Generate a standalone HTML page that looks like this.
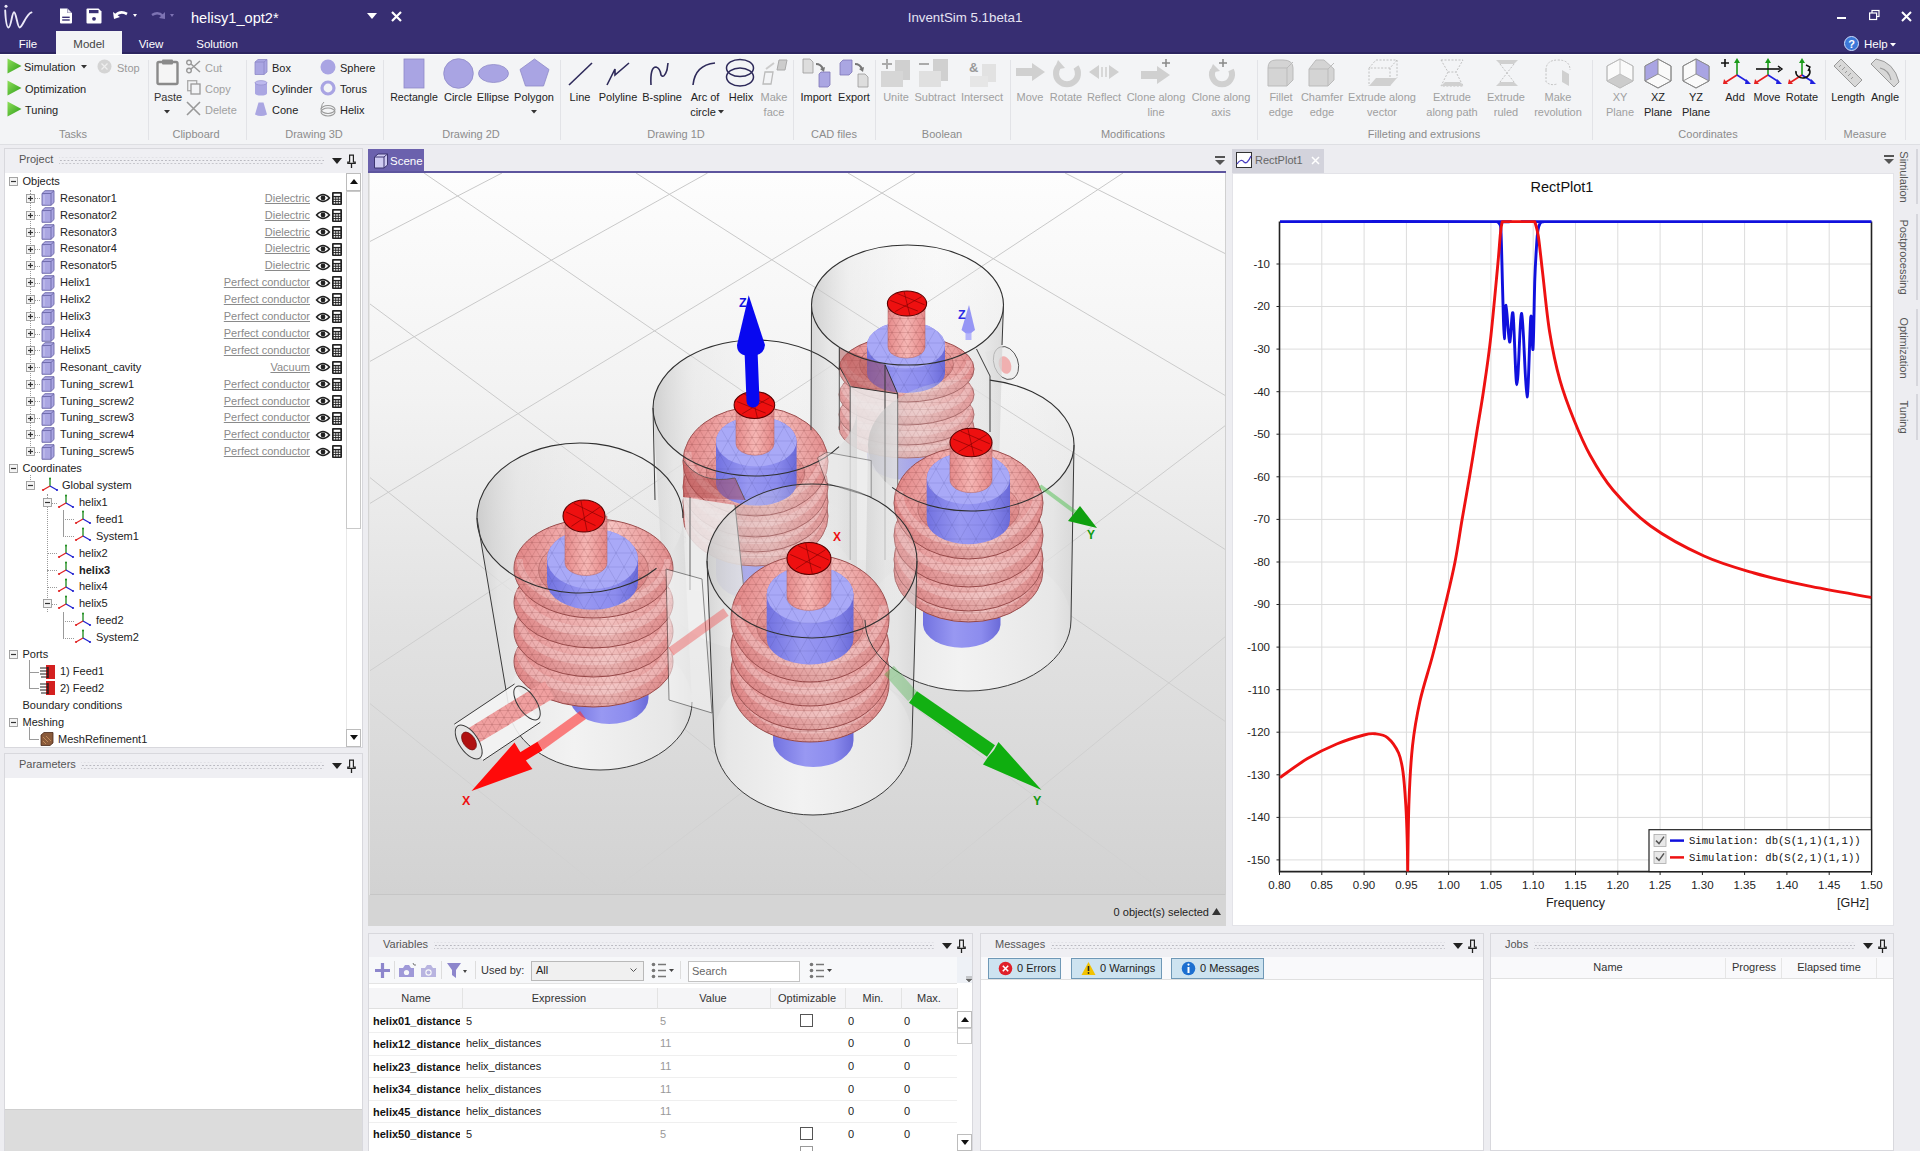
<!DOCTYPE html>
<html><head><meta charset="utf-8"><title>InventSim</title>
<style>
*{box-sizing:border-box;margin:0;padding:0}
html,body{width:1920px;height:1151px;overflow:hidden;background:#ededf1;font-family:"Liberation Sans",sans-serif;font-size:11px;color:#222}
.a{position:absolute}
.t{position:absolute;white-space:nowrap}
svg.a{overflow:visible}
.dots{position:absolute;height:5px;background-image:radial-gradient(circle,#bdbdc4 0.9px,transparent 1.1px);background-size:3px 3px}
</style></head><body>
<div class="a" style="left:0px;top:0px;width:1920px;height:54px;background:#372e72"></div>
<div class="a" style="left:0px;top:52px;width:1920px;height:2px;background:#2c2560"></div>
<svg class="a" style="left:0px;top:0px;" width="40" height="32" viewBox="0 0 40 32"><circle cx="6" cy="6.3" r="1.5" fill="#ece9f8"/><path d="M5.2 10.5 C5.6 19 6.5 27.5 8.6 27.5 C11 27.5 12 12.3 14 12.3 C16.2 12.3 17.4 27.5 19.6 27.5 C22.5 27.5 26 14 31.5 12.4" stroke="#ece9f8" stroke-width="1.9" fill="none" stroke-linecap="round"/></svg>
<svg class="a" style="left:59px;top:8px;" width="14" height="16" viewBox="0 0 14 16"><path d="M1 0.5 H8.5 L13 5 V14.5 Q13 15.5 12 15.5 H2 Q1 15.5 1 14.5 Z" fill="#fff"/><path d="M8.5 0.5 V5 H13 Z" fill="#3a3175"/><path d="M8.8 1 L12.6 4.8 H8.8 Z" fill="#fff" opacity="0.9"/><rect x="3.2" y="8.6" width="7.5" height="1.4" fill="#3a3175"/><rect x="3.2" y="11.3" width="7.5" height="1.4" fill="#3a3175"/></svg>
<svg class="a" style="left:86px;top:8px;" width="16" height="16" viewBox="0 0 16 16"><path d="M0.5 1.5 Q0.5 0.5 1.5 0.5 H12.5 L15.5 3.5 V14.5 Q15.5 15.5 14.5 15.5 H1.5 Q0.5 15.5 0.5 14.5 Z" fill="#fff"/><rect x="3" y="2" width="9.5" height="3.2" fill="#3a3175"/><circle cx="8" cy="10.8" r="1.9" fill="#3a3175"/></svg>
<svg class="a" style="left:112px;top:9px;" width="26" height="14" viewBox="0 0 26 14"><path d="M3 7 Q8 1 15 5" stroke="#fff" stroke-width="2.6" fill="none"/><path d="M1 3 L2 10 L8 8 Z" fill="#fff"/><path d="M21 5 L25 5 L23 8 Z" fill="#fff"/></svg>
<svg class="a" style="left:150px;top:9px;" width="26" height="14" viewBox="0 0 26 14"><path d="M13 7 Q8 2 2 6" stroke="#7d73b3" stroke-width="2.4" fill="none"/><path d="M15 3 L15 10 L9 9 Z" fill="#7d73b3"/><path d="M20 5 L24 5 L22 8 Z" fill="#7d73b3"/></svg>
<div class="t" style="left:191px;top:9.5px;font-size:14.6px;line-height:17.5px;color:#fff;">helisy1_opt2*</div>
<svg class="a" style="left:367px;top:13px;" width="10" height="6" viewBox="0 0 10 6"><path d="M0 0 H10 L5 6 Z" fill="#fff"/></svg>
<svg class="a" style="left:391px;top:11px;" width="11" height="11" viewBox="0 0 11 11"><path d="M1 1 L10 10 M10 1 L1 10" stroke="#fff" stroke-width="2.2"/></svg>
<div class="t" style="left:665px;width:600px;text-align:center;top:9.5px;font-size:13.3px;line-height:16.0px;color:#e6e4f2;">InventSim 5.1beta1</div>
<div class="a" style="left:1837px;top:17px;width:9px;height:2px;background:#fff"></div>
<svg class="a" style="left:1869px;top:10px;" width="11" height="11" viewBox="0 0 11 11"><rect x="3" y="0.5" width="7" height="6" fill="none" stroke="#fff" stroke-width="1.2"/><rect x="0.6" y="3" width="7" height="6.5" fill="#372e72" stroke="#fff" stroke-width="1.2"/></svg>
<svg class="a" style="left:1901px;top:11px;" width="11" height="11" viewBox="0 0 11 11"><path d="M1 1 L10 10 M10 1 L1 10" stroke="#fff" stroke-width="2"/></svg>
<div class="a" style="left:56px;top:31px;width:66px;height:24px;background:#f3f4f6"></div>
<div class="t" style="left:-272px;width:600px;text-align:center;top:37.9px;font-size:11.5px;line-height:13.8px;color:#fff;">File</div>
<div class="t" style="left:-211px;width:600px;text-align:center;top:37.9px;font-size:11.5px;line-height:13.8px;color:#444;">Model</div>
<div class="t" style="left:-149px;width:600px;text-align:center;top:37.9px;font-size:11.5px;line-height:13.8px;color:#fff;">View</div>
<div class="t" style="left:-83px;width:600px;text-align:center;top:37.9px;font-size:11.5px;line-height:13.8px;color:#fff;">Solution</div>
<svg class="a" style="left:1844px;top:36px;" width="15" height="15" viewBox="0 0 15 15"><circle cx="7.5" cy="7.5" r="7" fill="#3c78d8" stroke="#cfe0ff" stroke-width="1"/><text x="7.5" y="11.5" font-size="11" font-family="Liberation Sans" font-weight="bold" fill="#fff" text-anchor="middle">?</text></svg>
<div class="t" style="left:1864px;top:37.9px;font-size:11.5px;line-height:13.8px;color:#fff;">Help</div>
<svg class="a" style="left:1890px;top:43px;" width="6" height="4" viewBox="0 0 6 4"><path d="M0 0 H6 L3 3.5 Z" fill="#fff"/></svg>
<div class="a" style="left:0px;top:54px;width:1920px;height:91px;background:#f3f4f6"></div>
<div class="a" style="left:0px;top:54px;width:1920px;height:1px;background:#fff"></div>
<div class="a" style="left:0px;top:144px;width:1920px;height:1px;background:#dedfe3"></div>
<div class="a" style="left:148px;top:60px;width:1px;height:80px;background:#e2e3e7"></div>
<div class="a" style="left:246px;top:60px;width:1px;height:80px;background:#e2e3e7"></div>
<div class="a" style="left:383px;top:60px;width:1px;height:80px;background:#e2e3e7"></div>
<div class="a" style="left:560px;top:60px;width:1px;height:80px;background:#e2e3e7"></div>
<div class="a" style="left:793px;top:60px;width:1px;height:80px;background:#e2e3e7"></div>
<div class="a" style="left:875px;top:60px;width:1px;height:80px;background:#e2e3e7"></div>
<div class="a" style="left:1010px;top:60px;width:1px;height:80px;background:#e2e3e7"></div>
<div class="a" style="left:1257px;top:60px;width:1px;height:80px;background:#e2e3e7"></div>
<div class="a" style="left:1592px;top:60px;width:1px;height:80px;background:#e2e3e7"></div>
<div class="a" style="left:1825px;top:60px;width:1px;height:80px;background:#e2e3e7"></div>
<div class="a" style="left:1905px;top:60px;width:1px;height:80px;background:#e2e3e7"></div>
<div class="t" style="left:-227px;width:600px;text-align:center;top:127.7px;font-size:11px;line-height:13.2px;color:#8c8c8c;">Tasks</div>
<div class="t" style="left:-104px;width:600px;text-align:center;top:127.7px;font-size:11px;line-height:13.2px;color:#8c8c8c;">Clipboard</div>
<div class="t" style="left:14px;width:600px;text-align:center;top:127.7px;font-size:11px;line-height:13.2px;color:#8c8c8c;">Drawing 3D</div>
<div class="t" style="left:171px;width:600px;text-align:center;top:127.7px;font-size:11px;line-height:13.2px;color:#8c8c8c;">Drawing 2D</div>
<div class="t" style="left:376px;width:600px;text-align:center;top:127.7px;font-size:11px;line-height:13.2px;color:#8c8c8c;">Drawing 1D</div>
<div class="t" style="left:534px;width:600px;text-align:center;top:127.7px;font-size:11px;line-height:13.2px;color:#8c8c8c;">CAD files</div>
<div class="t" style="left:642px;width:600px;text-align:center;top:127.7px;font-size:11px;line-height:13.2px;color:#8c8c8c;">Boolean</div>
<div class="t" style="left:833px;width:600px;text-align:center;top:127.7px;font-size:11px;line-height:13.2px;color:#8c8c8c;">Modifications</div>
<div class="t" style="left:1124px;width:600px;text-align:center;top:127.7px;font-size:11px;line-height:13.2px;color:#8c8c8c;">Filleting and extrusions</div>
<div class="t" style="left:1408px;width:600px;text-align:center;top:127.7px;font-size:11px;line-height:13.2px;color:#8c8c8c;">Coordinates</div>
<div class="t" style="left:1565px;width:600px;text-align:center;top:127.7px;font-size:11px;line-height:13.2px;color:#8c8c8c;">Measure</div>
<svg class="a" style="left:7px;top:58px;" width="15" height="16" viewBox="0 0 15 16"><defs><linearGradient id="gp" x1="0" y1="0" x2="1" y2="1"><stop offset="0" stop-color="#8fe05a"/><stop offset="1" stop-color="#2a9a16"/></linearGradient></defs><path d="M0.5 0.5 L14.5 8 L0.5 15.5 Z" fill="url(#gp)"/></svg>
<svg class="a" style="left:7px;top:80px;" width="15" height="16" viewBox="0 0 15 16"><defs><linearGradient id="gp" x1="0" y1="0" x2="1" y2="1"><stop offset="0" stop-color="#8fe05a"/><stop offset="1" stop-color="#2a9a16"/></linearGradient></defs><path d="M0.5 0.5 L14.5 8 L0.5 15.5 Z" fill="url(#gp)"/></svg>
<svg class="a" style="left:7px;top:101px;" width="15" height="16" viewBox="0 0 15 16"><defs><linearGradient id="gp" x1="0" y1="0" x2="1" y2="1"><stop offset="0" stop-color="#8fe05a"/><stop offset="1" stop-color="#2a9a16"/></linearGradient></defs><path d="M0.5 0.5 L14.5 8 L0.5 15.5 Z" fill="url(#gp)"/></svg>
<div class="t" style="left:24px;top:60.7px;font-size:11px;line-height:13.2px;color:#222;">Simulation</div>
<svg class="a" style="left:81px;top:65px;" width="6" height="4" viewBox="0 0 6 4"><path d="M0 0 H6 L3 3.5 Z" fill="#333"/></svg>
<svg class="a" style="left:97px;top:59px;" width="15" height="15" viewBox="0 0 15 15"><circle cx="7.5" cy="7.5" r="7" fill="#d4d4d4"/><path d="M4.5 4.5 L10.5 10.5 M10.5 4.5 L4.5 10.5" stroke="#eee" stroke-width="1.3"/></svg>
<div class="t" style="left:117px;top:61.7px;font-size:11px;line-height:13.2px;color:#9a9a9a;">Stop</div>
<div class="t" style="left:25px;top:82.7px;font-size:11px;line-height:13.2px;color:#222;">Optimization</div>
<div class="t" style="left:25px;top:103.7px;font-size:11px;line-height:13.2px;color:#222;">Tuning</div>
<svg class="a" style="left:156px;top:58px;" width="24" height="28" viewBox="0 0 24 28"><rect x="1.5" y="4" width="20" height="22" rx="1.5" fill="#f5f5f5" stroke="#8a8a8a" stroke-width="2.4"/><rect x="6" y="1.5" width="11" height="5" rx="1" fill="#8a8a8a"/></svg>
<div class="t" style="left:-132px;width:600px;text-align:center;top:90.7px;font-size:11px;line-height:13.2px;color:#333;">Paste</div>
<svg class="a" style="left:164px;top:110px;" width="6" height="4" viewBox="0 0 6 4"><path d="M0 0 H6 L3 3.5 Z" fill="#333"/></svg>
<svg class="a" style="left:186px;top:59px;" width="15" height="15" viewBox="0 0 15 15"><circle cx="3" cy="11.5" r="2.3" fill="none" stroke="#999" stroke-width="1.4"/><circle cx="3" cy="3.5" r="2.3" fill="none" stroke="#999" stroke-width="1.4"/><path d="M5 5 L14 13 M5 10 L14 2" stroke="#999" stroke-width="1.5"/></svg>
<div class="t" style="left:205px;top:61.7px;font-size:11px;line-height:13.2px;color:#a0a0a0;">Cut</div>
<svg class="a" style="left:187px;top:80px;" width="14" height="15" viewBox="0 0 14 15"><rect x="0.7" y="0.7" width="9" height="10" fill="none" stroke="#aaa" stroke-width="1.3"/><rect x="4" y="4" width="9" height="10" fill="#f3f4f6" stroke="#999" stroke-width="1.3"/></svg>
<div class="t" style="left:205px;top:82.7px;font-size:11px;line-height:13.2px;color:#a0a0a0;">Copy</div>
<svg class="a" style="left:186px;top:101px;" width="15" height="15" viewBox="0 0 15 15"><path d="M1 1 L14 14 M14 1 L1 14" stroke="#999" stroke-width="1.6"/></svg>
<div class="t" style="left:205px;top:103.7px;font-size:11px;line-height:13.2px;color:#a0a0a0;">Delete</div>
<svg class="a" style="left:254px;top:59px;" width="14" height="16" viewBox="0 0 14 16"><path d="M1 3 L4 0.5 H13 V13 L10 15.5 H1 Z" fill="#aaa6e2" stroke="#8e89c8" stroke-width="0.8"/><path d="M1 3 H10 V15.5 M10 3 L13 0.5" stroke="#8e89c8" fill="none" stroke-width="0.8"/></svg>
<div class="t" style="left:272px;top:61.7px;font-size:11px;line-height:13.2px;color:#222;">Box</div>
<svg class="a" style="left:320px;top:59px;" width="16" height="16" viewBox="0 0 16 16"><circle cx="8" cy="8" r="7.5" fill="#a9a4e3"/></svg>
<div class="t" style="left:340px;top:61.7px;font-size:11px;line-height:13.2px;color:#222;">Sphere</div>
<svg class="a" style="left:254px;top:80px;" width="14" height="16" viewBox="0 0 14 16"><rect x="1" y="2.5" width="12" height="11" fill="#aaa6e2"/><ellipse cx="7" cy="13.5" rx="6" ry="2" fill="#aaa6e2"/><ellipse cx="7" cy="2.8" rx="6" ry="2.2" fill="#bdb9ee" stroke="#8e89c8" stroke-width="0.6"/></svg>
<div class="t" style="left:272px;top:82.7px;font-size:11px;line-height:13.2px;color:#222;">Cylinder</div>
<svg class="a" style="left:320px;top:80px;" width="16" height="16" viewBox="0 0 16 16"><circle cx="8" cy="8" r="6" fill="none" stroke="#a9a4e3" stroke-width="3.2"/></svg>
<div class="t" style="left:340px;top:82.7px;font-size:11px;line-height:13.2px;color:#222;">Torus</div>
<svg class="a" style="left:254px;top:101px;" width="14" height="16" viewBox="0 0 14 16"><path d="M4.5 1.5 H9.5 L13 13.5 Q7 16.5 1 13.5 Z" fill="#aaa6e2"/></svg>
<div class="t" style="left:272px;top:103.7px;font-size:11px;line-height:13.2px;color:#222;">Cone</div>
<svg class="a" style="left:320px;top:101px;" width="16" height="16" viewBox="0 0 16 16"><ellipse cx="8" cy="8.5" rx="7" ry="4" fill="none" stroke="#999" stroke-width="1.1"/><ellipse cx="8" cy="11" rx="7" ry="4" fill="none" stroke="#999" stroke-width="1.1"/><path d="M1 8 Q2 2 4 1" stroke="#999" fill="none" stroke-width="1"/></svg>
<div class="t" style="left:340px;top:103.7px;font-size:11px;line-height:13.2px;color:#222;">Helix</div>
<svg class="a" style="left:403px;top:58px;" width="22" height="31" viewBox="0 0 22 31"><rect x="1" y="1" width="20" height="29" fill="#a9a4e3" stroke="#8e89c8" stroke-width="0.8"/></svg>
<div class="t" style="left:114px;width:600px;text-align:center;top:90.9px;font-size:10.6px;line-height:12.7px;color:#222;">Rectangle</div>
<svg class="a" style="left:443px;top:58px;" width="31" height="31" viewBox="0 0 31 31"><circle cx="15.5" cy="15.5" r="14.8" fill="#a9a4e3" stroke="#8e89c8" stroke-width="0.8"/></svg>
<div class="t" style="left:158px;width:600px;text-align:center;top:90.7px;font-size:11px;line-height:13.2px;color:#222;">Circle</div>
<svg class="a" style="left:478px;top:64px;" width="31" height="19" viewBox="0 0 31 19"><ellipse cx="15.5" cy="9.5" rx="15" ry="9" fill="#a9a4e3" stroke="#8e89c8" stroke-width="0.8"/></svg>
<div class="t" style="left:193px;width:600px;text-align:center;top:90.7px;font-size:11px;line-height:13.2px;color:#222;">Ellipse</div>
<svg class="a" style="left:519px;top:58px;" width="31" height="29" viewBox="0 0 31 29"><path d="M15.5 1 L30 11.5 L24.5 28 H6.5 L1 11.5 Z" fill="#a9a4e3" stroke="#8e89c8" stroke-width="0.8"/></svg>
<div class="t" style="left:234px;width:600px;text-align:center;top:90.7px;font-size:11px;line-height:13.2px;color:#222;">Polygon</div>
<svg class="a" style="left:531px;top:110px;" width="6" height="4" viewBox="0 0 6 4"><path d="M0 0 H6 L3 3.5 Z" fill="#333"/></svg>
<svg class="a" style="left:568px;top:61px;" width="26" height="26" viewBox="0 0 26 26"><path d="M1 24 L24 2" stroke="#2e2a5a" stroke-width="1.6"/></svg>
<div class="t" style="left:280px;width:600px;text-align:center;top:90.7px;font-size:11px;line-height:13.2px;color:#222;">Line</div>
<svg class="a" style="left:605px;top:61px;" width="26" height="26" viewBox="0 0 26 26"><path d="M2 24 L10 8 L10 14 L24 2" stroke="#2e2a5a" stroke-width="1.6" fill="none"/></svg>
<div class="t" style="left:318px;width:600px;text-align:center;top:90.7px;font-size:11px;line-height:13.2px;color:#222;">Polyline</div>
<svg class="a" style="left:648px;top:61px;" width="26" height="26" viewBox="0 0 26 26"><path d="M3 24 Q2 6 8 6 Q12 7 13 14 Q16 18 19 9 L20 2" stroke="#2e2a5a" stroke-width="1.6" fill="none"/></svg>
<div class="t" style="left:362px;width:600px;text-align:center;top:90.7px;font-size:11px;line-height:13.2px;color:#222;">B-spline</div>
<svg class="a" style="left:691px;top:61px;" width="26" height="26" viewBox="0 0 26 26"><path d="M2 24 Q4 4 24 2" stroke="#2e2a5a" stroke-width="1.6" fill="none"/></svg>
<div class="t" style="left:405px;width:600px;text-align:center;top:90.7px;font-size:11px;line-height:13.2px;color:#222;">Arc of</div>
<div class="t" style="left:403px;width:600px;text-align:center;top:105.7px;font-size:11px;line-height:13.2px;color:#222;">circle</div>
<svg class="a" style="left:718px;top:110px;" width="6" height="4" viewBox="0 0 6 4"><path d="M0 0 H6 L3 3.5 Z" fill="#333"/></svg>
<svg class="a" style="left:725px;top:58px;" width="32" height="30" viewBox="0 0 32 30"><ellipse cx="15" cy="10" rx="13.5" ry="8.5" fill="none" stroke="#2e2a5a" stroke-width="1.5"/><ellipse cx="15" cy="19" rx="13.5" ry="9" fill="none" stroke="#2e2a5a" stroke-width="1.5"/></svg>
<div class="t" style="left:441px;width:600px;text-align:center;top:90.7px;font-size:11px;line-height:13.2px;color:#222;">Helix</div>
<svg class="a" style="left:760px;top:58px;" width="28" height="29" viewBox="0 0 28 29"><path d="M19 2 H27 L25 12 H17 Z" fill="#ccc" stroke="#aaa" stroke-width="1"/><path d="M5 14 H13 L11 26 H3 Z" fill="none" stroke="#bbb" stroke-width="1.3"/><path d="M6 11 L14 5" stroke="#ccc" stroke-width="2"/></svg>
<div class="t" style="left:474px;width:600px;text-align:center;top:90.7px;font-size:11px;line-height:13.2px;color:#a0a0a0;">Make</div>
<div class="t" style="left:474px;width:600px;text-align:center;top:105.7px;font-size:11px;line-height:13.2px;color:#a0a0a0;">face</div>
<svg class="a" style="left:801px;top:58px;" width="32" height="30" viewBox="0 0 32 30"><path d="M2 1 H9 L12 4 V15 H2 Z" fill="#ddd" stroke="#999" stroke-width="0.8"/><path d="M15 6 Q20 6 22 11" stroke="#777" stroke-width="2.2" fill="none"/><path d="M19 11 L24 9 L23 14 Z" fill="#777"/><path d="M18 16 L20 14 H29 V27 L27 29 H18 Z" fill="#aaa6e2" stroke="#7d76b8" stroke-width="0.8"/></svg>
<div class="t" style="left:516px;width:600px;text-align:center;top:90.7px;font-size:11px;line-height:13.2px;color:#222;">Import</div>
<svg class="a" style="left:839px;top:58px;" width="32" height="30" viewBox="0 0 32 30"><path d="M1 5 L4 2 H13 V14 L10 17 H1 Z" fill="#aaa6e2" stroke="#7d76b8" stroke-width="0.8"/><path d="M16 6 Q21 6 23 11" stroke="#777" stroke-width="2.2" fill="none"/><path d="M20 11 L25 9 L24 14 Z" fill="#777"/><path d="M19 16 H26 L29 19 V29 H19 Z" fill="#ddd" stroke="#999" stroke-width="0.8"/></svg>
<div class="t" style="left:554px;width:600px;text-align:center;top:90.7px;font-size:11px;line-height:13.2px;color:#222;">Export</div>
<svg class="a" style="left:880px;top:58px;" width="32" height="30" viewBox="0 0 32 30"><path d="M7 1 V11 M2 6 H12" stroke="#aaa" stroke-width="2"/><rect x="15" y="2" width="15" height="20" fill="#d0d0d0"/><rect x="1" y="13" width="22" height="16" fill="#d6d6d6"/></svg>
<div class="t" style="left:596px;width:600px;text-align:center;top:90.7px;font-size:11px;line-height:13.2px;color:#a0a0a0;">Unite</div>
<svg class="a" style="left:918px;top:58px;" width="32" height="30" viewBox="0 0 32 30"><path d="M1 6 H11" stroke="#aaa" stroke-width="2"/><rect x="15" y="1" width="15" height="22" fill="#d0d0d0"/><rect x="1" y="13" width="22" height="16" fill="#e0e0e0"/></svg>
<div class="t" style="left:635px;width:600px;text-align:center;top:90.7px;font-size:11px;line-height:13.2px;color:#a0a0a0;">Subtract</div>
<svg class="a" style="left:968px;top:58px;" width="32" height="30" viewBox="0 0 32 30"><text x="1" y="14" font-size="13" font-family="Liberation Sans" font-weight="bold" fill="#999">&amp;</text><rect x="14" y="6" width="14" height="18" fill="#e2e2e2"/><rect x="2" y="18" width="18" height="11" fill="#e6e6e6"/></svg>
<div class="t" style="left:682px;width:600px;text-align:center;top:90.7px;font-size:11px;line-height:13.2px;color:#a0a0a0;">Intersect</div>
<svg class="a" style="left:1015px;top:63px;" width="32" height="18" viewBox="0 0 32 18"><path d="M1 5 H17 V0 L30 9 L17 18 V13 H1 Z" fill="#d0d0d0"/></svg>
<div class="t" style="left:730px;width:600px;text-align:center;top:90.7px;font-size:11px;line-height:13.2px;color:#a0a0a0;">Move</div>
<svg class="a" style="left:1052px;top:58px;" width="30" height="30" viewBox="0 0 30 30"><path d="M6 9 A11 11 0 1 0 24 9" stroke="#d0d0d0" stroke-width="6" fill="none"/><path d="M2 12 L6 2 L13 10 Z" fill="#d0d0d0"/></svg>
<div class="t" style="left:766px;width:600px;text-align:center;top:90.7px;font-size:11px;line-height:13.2px;color:#a0a0a0;">Rotate</div>
<svg class="a" style="left:1088px;top:64px;" width="32" height="16" viewBox="0 0 32 16"><path d="M1 8 L11 1 V15 Z M31 8 L21 1 V15 Z" fill="#d0d0d0"/><path d="M14 3 V13 M18 3 V13" stroke="#d8d8d8" stroke-width="2"/></svg>
<div class="t" style="left:804px;width:600px;text-align:center;top:90.7px;font-size:11px;line-height:13.2px;color:#a0a0a0;">Reflect</div>
<svg class="a" style="left:1140px;top:58px;" width="32" height="28" viewBox="0 0 32 28"><path d="M1 13 H17 V8 L30 17 L17 26 V21 H1 Z" fill="#d0d0d0"/><path d="M26 1 V9 M22 5 H30" stroke="#888" stroke-width="1.5"/></svg>
<div class="t" style="left:856px;width:600px;text-align:center;top:90.7px;font-size:11px;line-height:13.2px;color:#a0a0a0;">Clone along</div>
<div class="t" style="left:856px;width:600px;text-align:center;top:105.7px;font-size:11px;line-height:13.2px;color:#a0a0a0;">line</div>
<svg class="a" style="left:1207px;top:58px;" width="30" height="30" viewBox="0 0 30 30"><path d="M6 12 A10 10 0 1 0 24 12" stroke="#d0d0d0" stroke-width="6" fill="none"/><path d="M2 15 L6 6 L13 13 Z" fill="#d0d0d0"/><path d="M16 1 V9 M12 5 H20" stroke="#888" stroke-width="1.5"/></svg>
<div class="t" style="left:921px;width:600px;text-align:center;top:90.7px;font-size:11px;line-height:13.2px;color:#a0a0a0;">Clone along</div>
<div class="t" style="left:921px;width:600px;text-align:center;top:105.7px;font-size:11px;line-height:13.2px;color:#a0a0a0;">axis</div>
<svg class="a" style="left:1267px;top:58px;" width="28" height="30" viewBox="0 0 28 30"><path d="M1 28 V10 Q1 2 9 2 H16 Q26 2 26 10 V22 L20 28 Z" fill="#d4d4d4" stroke="#bbb" stroke-width="1"/><path d="M1 10 H20 V28 M20 10 L26 4" stroke="#bbb" fill="none"/></svg>
<div class="t" style="left:981px;width:600px;text-align:center;top:90.7px;font-size:11px;line-height:13.2px;color:#a0a0a0;">Fillet</div>
<div class="t" style="left:981px;width:600px;text-align:center;top:105.7px;font-size:11px;line-height:13.2px;color:#a0a0a0;">edge</div>
<svg class="a" style="left:1308px;top:58px;" width="28" height="30" viewBox="0 0 28 30"><path d="M1 28 V11 L8 2 H16 L26 11 V22 L20 28 Z" fill="#d4d4d4" stroke="#bbb" stroke-width="1"/><path d="M1 11 H20 V28 M20 11 L26 5" stroke="#bbb" fill="none"/></svg>
<div class="t" style="left:1022px;width:600px;text-align:center;top:90.7px;font-size:11px;line-height:13.2px;color:#a0a0a0;">Chamfer</div>
<div class="t" style="left:1022px;width:600px;text-align:center;top:105.7px;font-size:11px;line-height:13.2px;color:#a0a0a0;">edge</div>
<svg class="a" style="left:1368px;top:58px;" width="30" height="30" viewBox="0 0 30 30"><path d="M8 2 H29 L22 10 H1 Z M1 10 V28 M22 10 V28 M29 2 V20" stroke="#bbb" stroke-width="0.9" stroke-dasharray="2 1.5" fill="none"/><path d="M1 28 H22 L29 20 H8 Z" fill="#d0d0d0"/></svg>
<div class="t" style="left:1082px;width:600px;text-align:center;top:90.7px;font-size:11px;line-height:13.2px;color:#a0a0a0;">Extrude along</div>
<div class="t" style="left:1082px;width:600px;text-align:center;top:105.7px;font-size:11px;line-height:13.2px;color:#a0a0a0;">vector</div>
<svg class="a" style="left:1437px;top:58px;" width="30" height="30" viewBox="0 0 30 30"><path d="M4 2 H26 L19 14 H11 L4 2 M11 14 L4 28 H26 L19 14" stroke="#bbb" stroke-width="0.9" stroke-dasharray="2 1.5" fill="none"/><path d="M4 28 H26 L23 24 H8 Z" fill="#d0d0d0"/></svg>
<div class="t" style="left:1152px;width:600px;text-align:center;top:90.7px;font-size:11px;line-height:13.2px;color:#a0a0a0;">Extrude</div>
<div class="t" style="left:1152px;width:600px;text-align:center;top:105.7px;font-size:11px;line-height:13.2px;color:#a0a0a0;">along path</div>
<svg class="a" style="left:1492px;top:58px;" width="30" height="30" viewBox="0 0 30 30"><path d="M4 2 H26 L22 6 H8 Z" fill="#d0d0d0"/><path d="M8 6 L22 24 M22 6 L8 24" stroke="#bbb" stroke-width="0.9" stroke-dasharray="2 1.5"/><path d="M4 28 H26 L22 24 H8 Z" fill="#d0d0d0"/></svg>
<div class="t" style="left:1206px;width:600px;text-align:center;top:90.7px;font-size:11px;line-height:13.2px;color:#a0a0a0;">Extrude</div>
<div class="t" style="left:1206px;width:600px;text-align:center;top:105.7px;font-size:11px;line-height:13.2px;color:#a0a0a0;">ruled</div>
<svg class="a" style="left:1543px;top:58px;" width="32" height="30" viewBox="0 0 32 30"><path d="M3 12 Q3 2 15 2 Q27 2 27 12" stroke="#bbb" stroke-width="0.9" stroke-dasharray="2 1.5" fill="none"/><path d="M3 12 V24 Q8 28 14 26" stroke="#bbb" stroke-width="0.9" stroke-dasharray="2 1.5" fill="none"/><path d="M19 12 L26 16 V28 L19 24 Z" fill="#d0d0d0"/></svg>
<div class="t" style="left:1258px;width:600px;text-align:center;top:90.7px;font-size:11px;line-height:13.2px;color:#a0a0a0;">Make</div>
<div class="t" style="left:1258px;width:600px;text-align:center;top:105.7px;font-size:11px;line-height:13.2px;color:#a0a0a0;">revolution</div>
<svg class="a" style="left:1605px;top:58px;" width="30" height="31" viewBox="0 0 30 31"><path d="M15 1 L28 8 V23 L15 30 L2 23 V8 Z" fill="#fafafa" stroke="#bbb" stroke-width="0.9"/><path d="M2 23 L15 16 L28 23 L15 30 Z" fill="#ccc"/><path d="M15 1 V16 L2 23 M15 16 L28 23" stroke="#bbb" stroke-width="0.9" fill="none"/><path d="M15 1 L28 8 V23 L15 30 L2 23 V8 Z" fill="none" stroke="#bbb" stroke-width="0.9"/></svg>
<svg class="a" style="left:1643px;top:58px;" width="30" height="31" viewBox="0 0 30 31"><path d="M15 1 L28 8 V23 L15 30 L2 23 V8 Z" fill="#fafafa" stroke="#888" stroke-width="0.9"/><path d="M2 8 L15 1 V16 L2 23 Z" fill="#a9a4e3"/><path d="M15 1 V16 L2 23 M15 16 L28 23" stroke="#888" stroke-width="0.9" fill="none"/><path d="M15 1 L28 8 V23 L15 30 L2 23 V8 Z" fill="none" stroke="#888" stroke-width="0.9"/></svg>
<svg class="a" style="left:1681px;top:58px;" width="30" height="31" viewBox="0 0 30 31"><path d="M15 1 L28 8 V23 L15 30 L2 23 V8 Z" fill="#fafafa" stroke="#888" stroke-width="0.9"/><path d="M28 8 L15 1 V16 L28 23 Z" fill="#a9a4e3"/><path d="M15 1 V16 L2 23 M15 16 L28 23" stroke="#888" stroke-width="0.9" fill="none"/><path d="M15 1 L28 8 V23 L15 30 L2 23 V8 Z" fill="none" stroke="#888" stroke-width="0.9"/></svg>
<div class="t" style="left:1320px;width:600px;text-align:center;top:90.7px;font-size:11px;line-height:13.2px;color:#a0a0a0;">XY</div>
<div class="t" style="left:1320px;width:600px;text-align:center;top:105.7px;font-size:11px;line-height:13.2px;color:#a0a0a0;">Plane</div>
<div class="t" style="left:1358px;width:600px;text-align:center;top:90.7px;font-size:11px;line-height:13.2px;color:#222;">XZ</div>
<div class="t" style="left:1358px;width:600px;text-align:center;top:105.7px;font-size:11px;line-height:13.2px;color:#222;">Plane</div>
<div class="t" style="left:1396px;width:600px;text-align:center;top:90.7px;font-size:11px;line-height:13.2px;color:#222;">YZ</div>
<div class="t" style="left:1396px;width:600px;text-align:center;top:105.7px;font-size:11px;line-height:13.2px;color:#222;">Plane</div>
<svg class="a" style="left:1722px;top:58px;" width="30" height="30" viewBox="0 0 30 30"><path d="M15 17 V3" stroke="#1a9a1a" stroke-width="1.6"/><path d="M12 5 L15 0 L18 5 Z" fill="#1a9a1a"/><path d="M15 17 L4 24" stroke="#e62020" stroke-width="1.6"/><path d="M2 21 L1 26 L6 26 Z" fill="#e62020"/><path d="M15 17 L26 24" stroke="#2020e0" stroke-width="1.6"/><path d="M24 21 L29 26 L23 26 Z" fill="#2020e0"/><path d="M3 1 V9 M-1 5 H7" stroke="#111" stroke-width="1.6"/></svg>
<div class="t" style="left:1435px;width:600px;text-align:center;top:90.7px;font-size:11px;line-height:13.2px;color:#222;">Add</div>
<svg class="a" style="left:1753px;top:58px;" width="30" height="30" viewBox="0 0 30 30"><path d="M15 17 V3" stroke="#1a9a1a" stroke-width="1.6"/><path d="M12 5 L15 0 L18 5 Z" fill="#1a9a1a"/><path d="M15 17 L4 24" stroke="#e62020" stroke-width="1.6"/><path d="M2 21 L1 26 L6 26 Z" fill="#e62020"/><path d="M15 17 L26 24" stroke="#2020e0" stroke-width="1.6"/><path d="M24 21 L29 26 L23 26 Z" fill="#2020e0"/><path d="M3 11 H27" stroke="#111" stroke-width="1.6"/><path d="M25 8 L29 11 L25 14" stroke="#111" stroke-width="1.4" fill="none"/></svg>
<div class="t" style="left:1467px;width:600px;text-align:center;top:90.7px;font-size:11px;line-height:13.2px;color:#222;">Move</div>
<svg class="a" style="left:1787px;top:58px;" width="30" height="30" viewBox="0 0 30 30"><path d="M15 17 V3" stroke="#1a9a1a" stroke-width="1.6"/><path d="M12 5 L15 0 L18 5 Z" fill="#1a9a1a"/><path d="M15 17 L4 24" stroke="#e62020" stroke-width="1.6"/><path d="M2 21 L1 26 L6 26 Z" fill="#e62020"/><path d="M15 17 L26 24" stroke="#2020e0" stroke-width="1.6"/><path d="M24 21 L29 26 L23 26 Z" fill="#2020e0"/><path d="M9 13 A7 6 0 1 0 22 11" stroke="#111" stroke-width="1.6" fill="none"/><path d="M19 7 L23 9 L21 13" stroke="#111" stroke-width="1.4" fill="none"/></svg>
<div class="t" style="left:1502px;width:600px;text-align:center;top:90.7px;font-size:11px;line-height:13.2px;color:#222;">Rotate</div>
<svg class="a" style="left:1833px;top:58px;" width="30" height="30" viewBox="0 0 30 30"><path d="M1 8 L8 1 L29 22 L22 29 Z" fill="#d8d8d8" stroke="#999" stroke-width="1"/><path d="M6 9 L8 7 M9 12 L12 9 M12 15 L14 13 M15 18 L18 15 M18 21 L20 19" stroke="#888" stroke-width="0.8"/></svg>
<div class="t" style="left:1548px;width:600px;text-align:center;top:90.7px;font-size:11px;line-height:13.2px;color:#222;">Length</div>
<svg class="a" style="left:1870px;top:58px;" width="30" height="30" viewBox="0 0 30 30"><path d="M1 6 L6 1 Q24 4 29 24 L24 29 Z" fill="#d8d8d8" stroke="#999" stroke-width="1"/><path d="M10 10 Q19 12 21 22" stroke="#999" stroke-width="1.2" fill="none"/></svg>
<div class="t" style="left:1585px;width:600px;text-align:center;top:90.7px;font-size:11px;line-height:13.2px;color:#222;">Angle</div>
<div class="a" style="left:4px;top:148px;width:359px;height:600px;background:#fff;border:1px solid #d8d8dd"></div>
<div class="a" style="left:5px;top:149px;width:357px;height:24px;background:#efeff3"></div>
<div class="t" style="left:19px;top:153.4px;font-size:11px;line-height:13.2px;color:#555;">Project</div>
<div class="a" style="left:59px;top:157px;width:265px;height:7px;background-image:radial-gradient(circle,#a8a8b0 0.75px,transparent 1.15px),radial-gradient(circle,#a8a8b0 0.75px,transparent 1.15px);background-size:3.75px 7.5px;background-position:0 0,1.875px 3.75px;opacity:0.75"></div>
<svg class="a" style="left:332px;top:158px;" width="10" height="6" viewBox="0 0 10 6"><path d="M0 0 H10 L5 6 Z" fill="#222"/></svg>
<svg class="a" style="left:347px;top:154px;" width="9" height="15" viewBox="0 0 9 15"><path d="M2.6 1.2 H6.4 V8 H8.2 V9.4 H0.8 V8 H2.6 Z" fill="#f4f4f6" stroke="#222" stroke-width="1.2"/><path d="M4.5 9.5 V14" stroke="#222" stroke-width="1.3"/></svg>
<div class="a" style="left:346px;top:173px;width:15px;height:574px;background:#fff;border-left:1px solid #e8e8e8"></div>
<div class="a" style="left:346px;top:173px;width:15px;height:18px;background:#fff;border:1px solid #bcbcbc"></div>
<svg class="a" style="left:350px;top:179px;" width="8" height="5" viewBox="0 0 8 5"><path d="M0 5 H8 L4 0 Z" fill="#111"/></svg>
<div class="a" style="left:346px;top:191px;width:15px;height:338px;background:#fff;border:1px solid #c9c9c9"></div>
<div class="a" style="left:346px;top:729px;width:15px;height:18px;background:#fff;border:1px solid #bcbcbc"></div>
<svg class="a" style="left:350px;top:735px;" width="8" height="5" viewBox="0 0 8 5"><path d="M0 0 H8 L4 5 Z" fill="#111"/></svg>
<div class="a" style="left:30px;top:190px;width:0;height:262px;border-left:1px dotted #9a9a9a"></div>
<svg class="a" style="left:9px;top:176.9px;" width="9" height="9" viewBox="0 0 9 9"><rect x="0.5" y="0.5" width="8" height="8" fill="#f4f4f4" stroke="#9a9a9a" stroke-width="0.9"/><path d="M2 4.5 H7" stroke="#333" stroke-width="1.2"/></svg>
<div class="t" style="left:22.5px;top:174.8px;font-size:11px;line-height:13.2px;color:#222;">Objects</div>
<div class="a" style="left:30px;top:198.3px;width:10px;height:0;border-top:1px dotted #9a9a9a"></div>
<svg class="a" style="left:26px;top:193.8px;" width="9" height="9" viewBox="0 0 9 9"><rect x="0.5" y="0.5" width="8" height="8" fill="#f4f4f4" stroke="#9a9a9a" stroke-width="0.9"/><path d="M2 4.5 H7" stroke="#333" stroke-width="1.2"/><path d="M4.5 2 V7" stroke="#333" stroke-width="1.2"/></svg>
<svg class="a" style="left:41px;top:190.3px;" width="14" height="16" viewBox="0 0 14 16"><path d="M1 3.5 L4 0.7 H13 V12.5 L10 15.3 H1 Z" fill="#aaa6e2" stroke="#6b66a8" stroke-width="0.9"/><path d="M1 3.5 H10 V15.3 M10 3.5 L13 0.7" stroke="#6b66a8" fill="none" stroke-width="0.9"/><path d="M3 5 V14" stroke="#c9c6f0" stroke-width="1"/></svg>
<div class="t" style="left:60px;top:191.7px;font-size:11px;line-height:13.2px;color:#222;">Resonator1</div>
<div class="t" style="left:-290px;width:600px;text-align:right;top:191.7px;font-size:11px;line-height:13.2px;color:#8a8a8a;text-decoration:underline;">Dielectric</div>
<svg class="a" style="left:316px;top:193.3px;" width="14" height="10" viewBox="0 0 14 10"><path d="M0.5 5 Q7 -2 13.5 5 Q7 12 0.5 5 Z" fill="#fff" stroke="#222" stroke-width="1.4"/><circle cx="7" cy="5" r="2.4" fill="#222"/></svg>
<svg class="a" style="left:332px;top:191.8px;" width="10" height="13" viewBox="0 0 10 13"><rect x="0" y="0" width="10" height="13" rx="1" fill="#222"/><rect x="1.7" y="1.7" width="6.6" height="2.2" fill="#fff"/><g fill="#fff"><rect x="1.7" y="5.3" width="1.6" height="1.4"/><rect x="4.2" y="5.3" width="1.6" height="1.4"/><rect x="6.7" y="5.3" width="1.6" height="1.4"/><rect x="1.7" y="7.7" width="1.6" height="1.4"/><rect x="4.2" y="7.7" width="1.6" height="1.4"/><rect x="6.7" y="7.7" width="1.6" height="1.4"/><rect x="1.7" y="10.1" width="1.6" height="1.4"/><rect x="4.2" y="10.1" width="1.6" height="1.4"/><rect x="6.7" y="10.1" width="1.6" height="1.4"/></g></svg>
<div class="a" style="left:30px;top:215.2px;width:10px;height:0;border-top:1px dotted #9a9a9a"></div>
<svg class="a" style="left:26px;top:210.7px;" width="9" height="9" viewBox="0 0 9 9"><rect x="0.5" y="0.5" width="8" height="8" fill="#f4f4f4" stroke="#9a9a9a" stroke-width="0.9"/><path d="M2 4.5 H7" stroke="#333" stroke-width="1.2"/><path d="M4.5 2 V7" stroke="#333" stroke-width="1.2"/></svg>
<svg class="a" style="left:41px;top:207.2px;" width="14" height="16" viewBox="0 0 14 16"><path d="M1 3.5 L4 0.7 H13 V12.5 L10 15.3 H1 Z" fill="#aaa6e2" stroke="#6b66a8" stroke-width="0.9"/><path d="M1 3.5 H10 V15.3 M10 3.5 L13 0.7" stroke="#6b66a8" fill="none" stroke-width="0.9"/><path d="M3 5 V14" stroke="#c9c6f0" stroke-width="1"/></svg>
<div class="t" style="left:60px;top:208.6px;font-size:11px;line-height:13.2px;color:#222;">Resonator2</div>
<div class="t" style="left:-290px;width:600px;text-align:right;top:208.6px;font-size:11px;line-height:13.2px;color:#8a8a8a;text-decoration:underline;">Dielectric</div>
<svg class="a" style="left:316px;top:210.2px;" width="14" height="10" viewBox="0 0 14 10"><path d="M0.5 5 Q7 -2 13.5 5 Q7 12 0.5 5 Z" fill="#fff" stroke="#222" stroke-width="1.4"/><circle cx="7" cy="5" r="2.4" fill="#222"/></svg>
<svg class="a" style="left:332px;top:208.7px;" width="10" height="13" viewBox="0 0 10 13"><rect x="0" y="0" width="10" height="13" rx="1" fill="#222"/><rect x="1.7" y="1.7" width="6.6" height="2.2" fill="#fff"/><g fill="#fff"><rect x="1.7" y="5.3" width="1.6" height="1.4"/><rect x="4.2" y="5.3" width="1.6" height="1.4"/><rect x="6.7" y="5.3" width="1.6" height="1.4"/><rect x="1.7" y="7.7" width="1.6" height="1.4"/><rect x="4.2" y="7.7" width="1.6" height="1.4"/><rect x="6.7" y="7.7" width="1.6" height="1.4"/><rect x="1.7" y="10.1" width="1.6" height="1.4"/><rect x="4.2" y="10.1" width="1.6" height="1.4"/><rect x="6.7" y="10.1" width="1.6" height="1.4"/></g></svg>
<div class="a" style="left:30px;top:232.1px;width:10px;height:0;border-top:1px dotted #9a9a9a"></div>
<svg class="a" style="left:26px;top:227.6px;" width="9" height="9" viewBox="0 0 9 9"><rect x="0.5" y="0.5" width="8" height="8" fill="#f4f4f4" stroke="#9a9a9a" stroke-width="0.9"/><path d="M2 4.5 H7" stroke="#333" stroke-width="1.2"/><path d="M4.5 2 V7" stroke="#333" stroke-width="1.2"/></svg>
<svg class="a" style="left:41px;top:224.1px;" width="14" height="16" viewBox="0 0 14 16"><path d="M1 3.5 L4 0.7 H13 V12.5 L10 15.3 H1 Z" fill="#aaa6e2" stroke="#6b66a8" stroke-width="0.9"/><path d="M1 3.5 H10 V15.3 M10 3.5 L13 0.7" stroke="#6b66a8" fill="none" stroke-width="0.9"/><path d="M3 5 V14" stroke="#c9c6f0" stroke-width="1"/></svg>
<div class="t" style="left:60px;top:225.5px;font-size:11px;line-height:13.2px;color:#222;">Resonator3</div>
<div class="t" style="left:-290px;width:600px;text-align:right;top:225.5px;font-size:11px;line-height:13.2px;color:#8a8a8a;text-decoration:underline;">Dielectric</div>
<svg class="a" style="left:316px;top:227.1px;" width="14" height="10" viewBox="0 0 14 10"><path d="M0.5 5 Q7 -2 13.5 5 Q7 12 0.5 5 Z" fill="#fff" stroke="#222" stroke-width="1.4"/><circle cx="7" cy="5" r="2.4" fill="#222"/></svg>
<svg class="a" style="left:332px;top:225.6px;" width="10" height="13" viewBox="0 0 10 13"><rect x="0" y="0" width="10" height="13" rx="1" fill="#222"/><rect x="1.7" y="1.7" width="6.6" height="2.2" fill="#fff"/><g fill="#fff"><rect x="1.7" y="5.3" width="1.6" height="1.4"/><rect x="4.2" y="5.3" width="1.6" height="1.4"/><rect x="6.7" y="5.3" width="1.6" height="1.4"/><rect x="1.7" y="7.7" width="1.6" height="1.4"/><rect x="4.2" y="7.7" width="1.6" height="1.4"/><rect x="6.7" y="7.7" width="1.6" height="1.4"/><rect x="1.7" y="10.1" width="1.6" height="1.4"/><rect x="4.2" y="10.1" width="1.6" height="1.4"/><rect x="6.7" y="10.1" width="1.6" height="1.4"/></g></svg>
<div class="a" style="left:30px;top:249.0px;width:10px;height:0;border-top:1px dotted #9a9a9a"></div>
<svg class="a" style="left:26px;top:244.5px;" width="9" height="9" viewBox="0 0 9 9"><rect x="0.5" y="0.5" width="8" height="8" fill="#f4f4f4" stroke="#9a9a9a" stroke-width="0.9"/><path d="M2 4.5 H7" stroke="#333" stroke-width="1.2"/><path d="M4.5 2 V7" stroke="#333" stroke-width="1.2"/></svg>
<svg class="a" style="left:41px;top:241.0px;" width="14" height="16" viewBox="0 0 14 16"><path d="M1 3.5 L4 0.7 H13 V12.5 L10 15.3 H1 Z" fill="#aaa6e2" stroke="#6b66a8" stroke-width="0.9"/><path d="M1 3.5 H10 V15.3 M10 3.5 L13 0.7" stroke="#6b66a8" fill="none" stroke-width="0.9"/><path d="M3 5 V14" stroke="#c9c6f0" stroke-width="1"/></svg>
<div class="t" style="left:60px;top:242.4px;font-size:11px;line-height:13.2px;color:#222;">Resonator4</div>
<div class="t" style="left:-290px;width:600px;text-align:right;top:242.4px;font-size:11px;line-height:13.2px;color:#8a8a8a;text-decoration:underline;">Dielectric</div>
<svg class="a" style="left:316px;top:244.0px;" width="14" height="10" viewBox="0 0 14 10"><path d="M0.5 5 Q7 -2 13.5 5 Q7 12 0.5 5 Z" fill="#fff" stroke="#222" stroke-width="1.4"/><circle cx="7" cy="5" r="2.4" fill="#222"/></svg>
<svg class="a" style="left:332px;top:242.5px;" width="10" height="13" viewBox="0 0 10 13"><rect x="0" y="0" width="10" height="13" rx="1" fill="#222"/><rect x="1.7" y="1.7" width="6.6" height="2.2" fill="#fff"/><g fill="#fff"><rect x="1.7" y="5.3" width="1.6" height="1.4"/><rect x="4.2" y="5.3" width="1.6" height="1.4"/><rect x="6.7" y="5.3" width="1.6" height="1.4"/><rect x="1.7" y="7.7" width="1.6" height="1.4"/><rect x="4.2" y="7.7" width="1.6" height="1.4"/><rect x="6.7" y="7.7" width="1.6" height="1.4"/><rect x="1.7" y="10.1" width="1.6" height="1.4"/><rect x="4.2" y="10.1" width="1.6" height="1.4"/><rect x="6.7" y="10.1" width="1.6" height="1.4"/></g></svg>
<div class="a" style="left:30px;top:265.9px;width:10px;height:0;border-top:1px dotted #9a9a9a"></div>
<svg class="a" style="left:26px;top:261.4px;" width="9" height="9" viewBox="0 0 9 9"><rect x="0.5" y="0.5" width="8" height="8" fill="#f4f4f4" stroke="#9a9a9a" stroke-width="0.9"/><path d="M2 4.5 H7" stroke="#333" stroke-width="1.2"/><path d="M4.5 2 V7" stroke="#333" stroke-width="1.2"/></svg>
<svg class="a" style="left:41px;top:257.9px;" width="14" height="16" viewBox="0 0 14 16"><path d="M1 3.5 L4 0.7 H13 V12.5 L10 15.3 H1 Z" fill="#aaa6e2" stroke="#6b66a8" stroke-width="0.9"/><path d="M1 3.5 H10 V15.3 M10 3.5 L13 0.7" stroke="#6b66a8" fill="none" stroke-width="0.9"/><path d="M3 5 V14" stroke="#c9c6f0" stroke-width="1"/></svg>
<div class="t" style="left:60px;top:259.3px;font-size:11px;line-height:13.2px;color:#222;">Resonator5</div>
<div class="t" style="left:-290px;width:600px;text-align:right;top:259.3px;font-size:11px;line-height:13.2px;color:#8a8a8a;text-decoration:underline;">Dielectric</div>
<svg class="a" style="left:316px;top:260.9px;" width="14" height="10" viewBox="0 0 14 10"><path d="M0.5 5 Q7 -2 13.5 5 Q7 12 0.5 5 Z" fill="#fff" stroke="#222" stroke-width="1.4"/><circle cx="7" cy="5" r="2.4" fill="#222"/></svg>
<svg class="a" style="left:332px;top:259.4px;" width="10" height="13" viewBox="0 0 10 13"><rect x="0" y="0" width="10" height="13" rx="1" fill="#222"/><rect x="1.7" y="1.7" width="6.6" height="2.2" fill="#fff"/><g fill="#fff"><rect x="1.7" y="5.3" width="1.6" height="1.4"/><rect x="4.2" y="5.3" width="1.6" height="1.4"/><rect x="6.7" y="5.3" width="1.6" height="1.4"/><rect x="1.7" y="7.7" width="1.6" height="1.4"/><rect x="4.2" y="7.7" width="1.6" height="1.4"/><rect x="6.7" y="7.7" width="1.6" height="1.4"/><rect x="1.7" y="10.1" width="1.6" height="1.4"/><rect x="4.2" y="10.1" width="1.6" height="1.4"/><rect x="6.7" y="10.1" width="1.6" height="1.4"/></g></svg>
<div class="a" style="left:30px;top:282.8px;width:10px;height:0;border-top:1px dotted #9a9a9a"></div>
<svg class="a" style="left:26px;top:278.3px;" width="9" height="9" viewBox="0 0 9 9"><rect x="0.5" y="0.5" width="8" height="8" fill="#f4f4f4" stroke="#9a9a9a" stroke-width="0.9"/><path d="M2 4.5 H7" stroke="#333" stroke-width="1.2"/><path d="M4.5 2 V7" stroke="#333" stroke-width="1.2"/></svg>
<svg class="a" style="left:41px;top:274.8px;" width="14" height="16" viewBox="0 0 14 16"><path d="M1 3.5 L4 0.7 H13 V12.5 L10 15.3 H1 Z" fill="#aaa6e2" stroke="#6b66a8" stroke-width="0.9"/><path d="M1 3.5 H10 V15.3 M10 3.5 L13 0.7" stroke="#6b66a8" fill="none" stroke-width="0.9"/><path d="M3 5 V14" stroke="#c9c6f0" stroke-width="1"/></svg>
<div class="t" style="left:60px;top:276.2px;font-size:11px;line-height:13.2px;color:#222;">Helix1</div>
<div class="t" style="left:-290px;width:600px;text-align:right;top:276.2px;font-size:11px;line-height:13.2px;color:#8a8a8a;text-decoration:underline;">Perfect conductor</div>
<svg class="a" style="left:316px;top:277.8px;" width="14" height="10" viewBox="0 0 14 10"><path d="M0.5 5 Q7 -2 13.5 5 Q7 12 0.5 5 Z" fill="#fff" stroke="#222" stroke-width="1.4"/><circle cx="7" cy="5" r="2.4" fill="#222"/></svg>
<svg class="a" style="left:332px;top:276.3px;" width="10" height="13" viewBox="0 0 10 13"><rect x="0" y="0" width="10" height="13" rx="1" fill="#222"/><rect x="1.7" y="1.7" width="6.6" height="2.2" fill="#fff"/><g fill="#fff"><rect x="1.7" y="5.3" width="1.6" height="1.4"/><rect x="4.2" y="5.3" width="1.6" height="1.4"/><rect x="6.7" y="5.3" width="1.6" height="1.4"/><rect x="1.7" y="7.7" width="1.6" height="1.4"/><rect x="4.2" y="7.7" width="1.6" height="1.4"/><rect x="6.7" y="7.7" width="1.6" height="1.4"/><rect x="1.7" y="10.1" width="1.6" height="1.4"/><rect x="4.2" y="10.1" width="1.6" height="1.4"/><rect x="6.7" y="10.1" width="1.6" height="1.4"/></g></svg>
<div class="a" style="left:30px;top:299.7px;width:10px;height:0;border-top:1px dotted #9a9a9a"></div>
<svg class="a" style="left:26px;top:295.2px;" width="9" height="9" viewBox="0 0 9 9"><rect x="0.5" y="0.5" width="8" height="8" fill="#f4f4f4" stroke="#9a9a9a" stroke-width="0.9"/><path d="M2 4.5 H7" stroke="#333" stroke-width="1.2"/><path d="M4.5 2 V7" stroke="#333" stroke-width="1.2"/></svg>
<svg class="a" style="left:41px;top:291.7px;" width="14" height="16" viewBox="0 0 14 16"><path d="M1 3.5 L4 0.7 H13 V12.5 L10 15.3 H1 Z" fill="#aaa6e2" stroke="#6b66a8" stroke-width="0.9"/><path d="M1 3.5 H10 V15.3 M10 3.5 L13 0.7" stroke="#6b66a8" fill="none" stroke-width="0.9"/><path d="M3 5 V14" stroke="#c9c6f0" stroke-width="1"/></svg>
<div class="t" style="left:60px;top:293.1px;font-size:11px;line-height:13.2px;color:#222;">Helix2</div>
<div class="t" style="left:-290px;width:600px;text-align:right;top:293.1px;font-size:11px;line-height:13.2px;color:#8a8a8a;text-decoration:underline;">Perfect conductor</div>
<svg class="a" style="left:316px;top:294.7px;" width="14" height="10" viewBox="0 0 14 10"><path d="M0.5 5 Q7 -2 13.5 5 Q7 12 0.5 5 Z" fill="#fff" stroke="#222" stroke-width="1.4"/><circle cx="7" cy="5" r="2.4" fill="#222"/></svg>
<svg class="a" style="left:332px;top:293.2px;" width="10" height="13" viewBox="0 0 10 13"><rect x="0" y="0" width="10" height="13" rx="1" fill="#222"/><rect x="1.7" y="1.7" width="6.6" height="2.2" fill="#fff"/><g fill="#fff"><rect x="1.7" y="5.3" width="1.6" height="1.4"/><rect x="4.2" y="5.3" width="1.6" height="1.4"/><rect x="6.7" y="5.3" width="1.6" height="1.4"/><rect x="1.7" y="7.7" width="1.6" height="1.4"/><rect x="4.2" y="7.7" width="1.6" height="1.4"/><rect x="6.7" y="7.7" width="1.6" height="1.4"/><rect x="1.7" y="10.1" width="1.6" height="1.4"/><rect x="4.2" y="10.1" width="1.6" height="1.4"/><rect x="6.7" y="10.1" width="1.6" height="1.4"/></g></svg>
<div class="a" style="left:30px;top:316.6px;width:10px;height:0;border-top:1px dotted #9a9a9a"></div>
<svg class="a" style="left:26px;top:312.1px;" width="9" height="9" viewBox="0 0 9 9"><rect x="0.5" y="0.5" width="8" height="8" fill="#f4f4f4" stroke="#9a9a9a" stroke-width="0.9"/><path d="M2 4.5 H7" stroke="#333" stroke-width="1.2"/><path d="M4.5 2 V7" stroke="#333" stroke-width="1.2"/></svg>
<svg class="a" style="left:41px;top:308.6px;" width="14" height="16" viewBox="0 0 14 16"><path d="M1 3.5 L4 0.7 H13 V12.5 L10 15.3 H1 Z" fill="#aaa6e2" stroke="#6b66a8" stroke-width="0.9"/><path d="M1 3.5 H10 V15.3 M10 3.5 L13 0.7" stroke="#6b66a8" fill="none" stroke-width="0.9"/><path d="M3 5 V14" stroke="#c9c6f0" stroke-width="1"/></svg>
<div class="t" style="left:60px;top:310.0px;font-size:11px;line-height:13.2px;color:#222;">Helix3</div>
<div class="t" style="left:-290px;width:600px;text-align:right;top:310.0px;font-size:11px;line-height:13.2px;color:#8a8a8a;text-decoration:underline;">Perfect conductor</div>
<svg class="a" style="left:316px;top:311.6px;" width="14" height="10" viewBox="0 0 14 10"><path d="M0.5 5 Q7 -2 13.5 5 Q7 12 0.5 5 Z" fill="#fff" stroke="#222" stroke-width="1.4"/><circle cx="7" cy="5" r="2.4" fill="#222"/></svg>
<svg class="a" style="left:332px;top:310.1px;" width="10" height="13" viewBox="0 0 10 13"><rect x="0" y="0" width="10" height="13" rx="1" fill="#222"/><rect x="1.7" y="1.7" width="6.6" height="2.2" fill="#fff"/><g fill="#fff"><rect x="1.7" y="5.3" width="1.6" height="1.4"/><rect x="4.2" y="5.3" width="1.6" height="1.4"/><rect x="6.7" y="5.3" width="1.6" height="1.4"/><rect x="1.7" y="7.7" width="1.6" height="1.4"/><rect x="4.2" y="7.7" width="1.6" height="1.4"/><rect x="6.7" y="7.7" width="1.6" height="1.4"/><rect x="1.7" y="10.1" width="1.6" height="1.4"/><rect x="4.2" y="10.1" width="1.6" height="1.4"/><rect x="6.7" y="10.1" width="1.6" height="1.4"/></g></svg>
<div class="a" style="left:30px;top:333.5px;width:10px;height:0;border-top:1px dotted #9a9a9a"></div>
<svg class="a" style="left:26px;top:329.0px;" width="9" height="9" viewBox="0 0 9 9"><rect x="0.5" y="0.5" width="8" height="8" fill="#f4f4f4" stroke="#9a9a9a" stroke-width="0.9"/><path d="M2 4.5 H7" stroke="#333" stroke-width="1.2"/><path d="M4.5 2 V7" stroke="#333" stroke-width="1.2"/></svg>
<svg class="a" style="left:41px;top:325.5px;" width="14" height="16" viewBox="0 0 14 16"><path d="M1 3.5 L4 0.7 H13 V12.5 L10 15.3 H1 Z" fill="#aaa6e2" stroke="#6b66a8" stroke-width="0.9"/><path d="M1 3.5 H10 V15.3 M10 3.5 L13 0.7" stroke="#6b66a8" fill="none" stroke-width="0.9"/><path d="M3 5 V14" stroke="#c9c6f0" stroke-width="1"/></svg>
<div class="t" style="left:60px;top:326.9px;font-size:11px;line-height:13.2px;color:#222;">Helix4</div>
<div class="t" style="left:-290px;width:600px;text-align:right;top:326.9px;font-size:11px;line-height:13.2px;color:#8a8a8a;text-decoration:underline;">Perfect conductor</div>
<svg class="a" style="left:316px;top:328.5px;" width="14" height="10" viewBox="0 0 14 10"><path d="M0.5 5 Q7 -2 13.5 5 Q7 12 0.5 5 Z" fill="#fff" stroke="#222" stroke-width="1.4"/><circle cx="7" cy="5" r="2.4" fill="#222"/></svg>
<svg class="a" style="left:332px;top:327.0px;" width="10" height="13" viewBox="0 0 10 13"><rect x="0" y="0" width="10" height="13" rx="1" fill="#222"/><rect x="1.7" y="1.7" width="6.6" height="2.2" fill="#fff"/><g fill="#fff"><rect x="1.7" y="5.3" width="1.6" height="1.4"/><rect x="4.2" y="5.3" width="1.6" height="1.4"/><rect x="6.7" y="5.3" width="1.6" height="1.4"/><rect x="1.7" y="7.7" width="1.6" height="1.4"/><rect x="4.2" y="7.7" width="1.6" height="1.4"/><rect x="6.7" y="7.7" width="1.6" height="1.4"/><rect x="1.7" y="10.1" width="1.6" height="1.4"/><rect x="4.2" y="10.1" width="1.6" height="1.4"/><rect x="6.7" y="10.1" width="1.6" height="1.4"/></g></svg>
<div class="a" style="left:30px;top:350.4px;width:10px;height:0;border-top:1px dotted #9a9a9a"></div>
<svg class="a" style="left:26px;top:345.9px;" width="9" height="9" viewBox="0 0 9 9"><rect x="0.5" y="0.5" width="8" height="8" fill="#f4f4f4" stroke="#9a9a9a" stroke-width="0.9"/><path d="M2 4.5 H7" stroke="#333" stroke-width="1.2"/><path d="M4.5 2 V7" stroke="#333" stroke-width="1.2"/></svg>
<svg class="a" style="left:41px;top:342.4px;" width="14" height="16" viewBox="0 0 14 16"><path d="M1 3.5 L4 0.7 H13 V12.5 L10 15.3 H1 Z" fill="#aaa6e2" stroke="#6b66a8" stroke-width="0.9"/><path d="M1 3.5 H10 V15.3 M10 3.5 L13 0.7" stroke="#6b66a8" fill="none" stroke-width="0.9"/><path d="M3 5 V14" stroke="#c9c6f0" stroke-width="1"/></svg>
<div class="t" style="left:60px;top:343.8px;font-size:11px;line-height:13.2px;color:#222;">Helix5</div>
<div class="t" style="left:-290px;width:600px;text-align:right;top:343.8px;font-size:11px;line-height:13.2px;color:#8a8a8a;text-decoration:underline;">Perfect conductor</div>
<svg class="a" style="left:316px;top:345.4px;" width="14" height="10" viewBox="0 0 14 10"><path d="M0.5 5 Q7 -2 13.5 5 Q7 12 0.5 5 Z" fill="#fff" stroke="#222" stroke-width="1.4"/><circle cx="7" cy="5" r="2.4" fill="#222"/></svg>
<svg class="a" style="left:332px;top:343.9px;" width="10" height="13" viewBox="0 0 10 13"><rect x="0" y="0" width="10" height="13" rx="1" fill="#222"/><rect x="1.7" y="1.7" width="6.6" height="2.2" fill="#fff"/><g fill="#fff"><rect x="1.7" y="5.3" width="1.6" height="1.4"/><rect x="4.2" y="5.3" width="1.6" height="1.4"/><rect x="6.7" y="5.3" width="1.6" height="1.4"/><rect x="1.7" y="7.7" width="1.6" height="1.4"/><rect x="4.2" y="7.7" width="1.6" height="1.4"/><rect x="6.7" y="7.7" width="1.6" height="1.4"/><rect x="1.7" y="10.1" width="1.6" height="1.4"/><rect x="4.2" y="10.1" width="1.6" height="1.4"/><rect x="6.7" y="10.1" width="1.6" height="1.4"/></g></svg>
<div class="a" style="left:30px;top:367.3px;width:10px;height:0;border-top:1px dotted #9a9a9a"></div>
<svg class="a" style="left:26px;top:362.79999999999995px;" width="9" height="9" viewBox="0 0 9 9"><rect x="0.5" y="0.5" width="8" height="8" fill="#f4f4f4" stroke="#9a9a9a" stroke-width="0.9"/><path d="M2 4.5 H7" stroke="#333" stroke-width="1.2"/><path d="M4.5 2 V7" stroke="#333" stroke-width="1.2"/></svg>
<svg class="a" style="left:41px;top:359.29999999999995px;" width="14" height="16" viewBox="0 0 14 16"><path d="M1 3.5 L4 0.7 H13 V12.5 L10 15.3 H1 Z" fill="#aaa6e2" stroke="#6b66a8" stroke-width="0.9"/><path d="M1 3.5 H10 V15.3 M10 3.5 L13 0.7" stroke="#6b66a8" fill="none" stroke-width="0.9"/><path d="M3 5 V14" stroke="#c9c6f0" stroke-width="1"/></svg>
<div class="t" style="left:60px;top:360.7px;font-size:11px;line-height:13.2px;color:#222;">Resonant_cavity</div>
<div class="t" style="left:-290px;width:600px;text-align:right;top:360.7px;font-size:11px;line-height:13.2px;color:#8a8a8a;text-decoration:underline;">Vacuum</div>
<svg class="a" style="left:316px;top:362.29999999999995px;" width="14" height="10" viewBox="0 0 14 10"><path d="M0.5 5 Q7 -2 13.5 5 Q7 12 0.5 5 Z" fill="#fff" stroke="#222" stroke-width="1.4"/><circle cx="7" cy="5" r="2.4" fill="#222"/></svg>
<svg class="a" style="left:332px;top:360.79999999999995px;" width="10" height="13" viewBox="0 0 10 13"><rect x="0" y="0" width="10" height="13" rx="1" fill="#222"/><rect x="1.7" y="1.7" width="6.6" height="2.2" fill="#fff"/><g fill="#fff"><rect x="1.7" y="5.3" width="1.6" height="1.4"/><rect x="4.2" y="5.3" width="1.6" height="1.4"/><rect x="6.7" y="5.3" width="1.6" height="1.4"/><rect x="1.7" y="7.7" width="1.6" height="1.4"/><rect x="4.2" y="7.7" width="1.6" height="1.4"/><rect x="6.7" y="7.7" width="1.6" height="1.4"/><rect x="1.7" y="10.1" width="1.6" height="1.4"/><rect x="4.2" y="10.1" width="1.6" height="1.4"/><rect x="6.7" y="10.1" width="1.6" height="1.4"/></g></svg>
<div class="a" style="left:30px;top:384.2px;width:10px;height:0;border-top:1px dotted #9a9a9a"></div>
<svg class="a" style="left:26px;top:379.7px;" width="9" height="9" viewBox="0 0 9 9"><rect x="0.5" y="0.5" width="8" height="8" fill="#f4f4f4" stroke="#9a9a9a" stroke-width="0.9"/><path d="M2 4.5 H7" stroke="#333" stroke-width="1.2"/><path d="M4.5 2 V7" stroke="#333" stroke-width="1.2"/></svg>
<svg class="a" style="left:41px;top:376.2px;" width="14" height="16" viewBox="0 0 14 16"><path d="M1 3.5 L4 0.7 H13 V12.5 L10 15.3 H1 Z" fill="#aaa6e2" stroke="#6b66a8" stroke-width="0.9"/><path d="M1 3.5 H10 V15.3 M10 3.5 L13 0.7" stroke="#6b66a8" fill="none" stroke-width="0.9"/><path d="M3 5 V14" stroke="#c9c6f0" stroke-width="1"/></svg>
<div class="t" style="left:60px;top:377.6px;font-size:11px;line-height:13.2px;color:#222;">Tuning_screw1</div>
<div class="t" style="left:-290px;width:600px;text-align:right;top:377.6px;font-size:11px;line-height:13.2px;color:#8a8a8a;text-decoration:underline;">Perfect conductor</div>
<svg class="a" style="left:316px;top:379.2px;" width="14" height="10" viewBox="0 0 14 10"><path d="M0.5 5 Q7 -2 13.5 5 Q7 12 0.5 5 Z" fill="#fff" stroke="#222" stroke-width="1.4"/><circle cx="7" cy="5" r="2.4" fill="#222"/></svg>
<svg class="a" style="left:332px;top:377.7px;" width="10" height="13" viewBox="0 0 10 13"><rect x="0" y="0" width="10" height="13" rx="1" fill="#222"/><rect x="1.7" y="1.7" width="6.6" height="2.2" fill="#fff"/><g fill="#fff"><rect x="1.7" y="5.3" width="1.6" height="1.4"/><rect x="4.2" y="5.3" width="1.6" height="1.4"/><rect x="6.7" y="5.3" width="1.6" height="1.4"/><rect x="1.7" y="7.7" width="1.6" height="1.4"/><rect x="4.2" y="7.7" width="1.6" height="1.4"/><rect x="6.7" y="7.7" width="1.6" height="1.4"/><rect x="1.7" y="10.1" width="1.6" height="1.4"/><rect x="4.2" y="10.1" width="1.6" height="1.4"/><rect x="6.7" y="10.1" width="1.6" height="1.4"/></g></svg>
<div class="a" style="left:30px;top:401.1px;width:10px;height:0;border-top:1px dotted #9a9a9a"></div>
<svg class="a" style="left:26px;top:396.6px;" width="9" height="9" viewBox="0 0 9 9"><rect x="0.5" y="0.5" width="8" height="8" fill="#f4f4f4" stroke="#9a9a9a" stroke-width="0.9"/><path d="M2 4.5 H7" stroke="#333" stroke-width="1.2"/><path d="M4.5 2 V7" stroke="#333" stroke-width="1.2"/></svg>
<svg class="a" style="left:41px;top:393.1px;" width="14" height="16" viewBox="0 0 14 16"><path d="M1 3.5 L4 0.7 H13 V12.5 L10 15.3 H1 Z" fill="#aaa6e2" stroke="#6b66a8" stroke-width="0.9"/><path d="M1 3.5 H10 V15.3 M10 3.5 L13 0.7" stroke="#6b66a8" fill="none" stroke-width="0.9"/><path d="M3 5 V14" stroke="#c9c6f0" stroke-width="1"/></svg>
<div class="t" style="left:60px;top:394.5px;font-size:11px;line-height:13.2px;color:#222;">Tuning_screw2</div>
<div class="t" style="left:-290px;width:600px;text-align:right;top:394.5px;font-size:11px;line-height:13.2px;color:#8a8a8a;text-decoration:underline;">Perfect conductor</div>
<svg class="a" style="left:316px;top:396.1px;" width="14" height="10" viewBox="0 0 14 10"><path d="M0.5 5 Q7 -2 13.5 5 Q7 12 0.5 5 Z" fill="#fff" stroke="#222" stroke-width="1.4"/><circle cx="7" cy="5" r="2.4" fill="#222"/></svg>
<svg class="a" style="left:332px;top:394.6px;" width="10" height="13" viewBox="0 0 10 13"><rect x="0" y="0" width="10" height="13" rx="1" fill="#222"/><rect x="1.7" y="1.7" width="6.6" height="2.2" fill="#fff"/><g fill="#fff"><rect x="1.7" y="5.3" width="1.6" height="1.4"/><rect x="4.2" y="5.3" width="1.6" height="1.4"/><rect x="6.7" y="5.3" width="1.6" height="1.4"/><rect x="1.7" y="7.7" width="1.6" height="1.4"/><rect x="4.2" y="7.7" width="1.6" height="1.4"/><rect x="6.7" y="7.7" width="1.6" height="1.4"/><rect x="1.7" y="10.1" width="1.6" height="1.4"/><rect x="4.2" y="10.1" width="1.6" height="1.4"/><rect x="6.7" y="10.1" width="1.6" height="1.4"/></g></svg>
<div class="a" style="left:30px;top:418.0px;width:10px;height:0;border-top:1px dotted #9a9a9a"></div>
<svg class="a" style="left:26px;top:413.5px;" width="9" height="9" viewBox="0 0 9 9"><rect x="0.5" y="0.5" width="8" height="8" fill="#f4f4f4" stroke="#9a9a9a" stroke-width="0.9"/><path d="M2 4.5 H7" stroke="#333" stroke-width="1.2"/><path d="M4.5 2 V7" stroke="#333" stroke-width="1.2"/></svg>
<svg class="a" style="left:41px;top:410.0px;" width="14" height="16" viewBox="0 0 14 16"><path d="M1 3.5 L4 0.7 H13 V12.5 L10 15.3 H1 Z" fill="#aaa6e2" stroke="#6b66a8" stroke-width="0.9"/><path d="M1 3.5 H10 V15.3 M10 3.5 L13 0.7" stroke="#6b66a8" fill="none" stroke-width="0.9"/><path d="M3 5 V14" stroke="#c9c6f0" stroke-width="1"/></svg>
<div class="t" style="left:60px;top:411.4px;font-size:11px;line-height:13.2px;color:#222;">Tuning_screw3</div>
<div class="t" style="left:-290px;width:600px;text-align:right;top:411.4px;font-size:11px;line-height:13.2px;color:#8a8a8a;text-decoration:underline;">Perfect conductor</div>
<svg class="a" style="left:316px;top:413.0px;" width="14" height="10" viewBox="0 0 14 10"><path d="M0.5 5 Q7 -2 13.5 5 Q7 12 0.5 5 Z" fill="#fff" stroke="#222" stroke-width="1.4"/><circle cx="7" cy="5" r="2.4" fill="#222"/></svg>
<svg class="a" style="left:332px;top:411.5px;" width="10" height="13" viewBox="0 0 10 13"><rect x="0" y="0" width="10" height="13" rx="1" fill="#222"/><rect x="1.7" y="1.7" width="6.6" height="2.2" fill="#fff"/><g fill="#fff"><rect x="1.7" y="5.3" width="1.6" height="1.4"/><rect x="4.2" y="5.3" width="1.6" height="1.4"/><rect x="6.7" y="5.3" width="1.6" height="1.4"/><rect x="1.7" y="7.7" width="1.6" height="1.4"/><rect x="4.2" y="7.7" width="1.6" height="1.4"/><rect x="6.7" y="7.7" width="1.6" height="1.4"/><rect x="1.7" y="10.1" width="1.6" height="1.4"/><rect x="4.2" y="10.1" width="1.6" height="1.4"/><rect x="6.7" y="10.1" width="1.6" height="1.4"/></g></svg>
<div class="a" style="left:30px;top:434.9px;width:10px;height:0;border-top:1px dotted #9a9a9a"></div>
<svg class="a" style="left:26px;top:430.4px;" width="9" height="9" viewBox="0 0 9 9"><rect x="0.5" y="0.5" width="8" height="8" fill="#f4f4f4" stroke="#9a9a9a" stroke-width="0.9"/><path d="M2 4.5 H7" stroke="#333" stroke-width="1.2"/><path d="M4.5 2 V7" stroke="#333" stroke-width="1.2"/></svg>
<svg class="a" style="left:41px;top:426.9px;" width="14" height="16" viewBox="0 0 14 16"><path d="M1 3.5 L4 0.7 H13 V12.5 L10 15.3 H1 Z" fill="#aaa6e2" stroke="#6b66a8" stroke-width="0.9"/><path d="M1 3.5 H10 V15.3 M10 3.5 L13 0.7" stroke="#6b66a8" fill="none" stroke-width="0.9"/><path d="M3 5 V14" stroke="#c9c6f0" stroke-width="1"/></svg>
<div class="t" style="left:60px;top:428.3px;font-size:11px;line-height:13.2px;color:#222;">Tuning_screw4</div>
<div class="t" style="left:-290px;width:600px;text-align:right;top:428.3px;font-size:11px;line-height:13.2px;color:#8a8a8a;text-decoration:underline;">Perfect conductor</div>
<svg class="a" style="left:316px;top:429.9px;" width="14" height="10" viewBox="0 0 14 10"><path d="M0.5 5 Q7 -2 13.5 5 Q7 12 0.5 5 Z" fill="#fff" stroke="#222" stroke-width="1.4"/><circle cx="7" cy="5" r="2.4" fill="#222"/></svg>
<svg class="a" style="left:332px;top:428.4px;" width="10" height="13" viewBox="0 0 10 13"><rect x="0" y="0" width="10" height="13" rx="1" fill="#222"/><rect x="1.7" y="1.7" width="6.6" height="2.2" fill="#fff"/><g fill="#fff"><rect x="1.7" y="5.3" width="1.6" height="1.4"/><rect x="4.2" y="5.3" width="1.6" height="1.4"/><rect x="6.7" y="5.3" width="1.6" height="1.4"/><rect x="1.7" y="7.7" width="1.6" height="1.4"/><rect x="4.2" y="7.7" width="1.6" height="1.4"/><rect x="6.7" y="7.7" width="1.6" height="1.4"/><rect x="1.7" y="10.1" width="1.6" height="1.4"/><rect x="4.2" y="10.1" width="1.6" height="1.4"/><rect x="6.7" y="10.1" width="1.6" height="1.4"/></g></svg>
<div class="a" style="left:30px;top:451.8px;width:10px;height:0;border-top:1px dotted #9a9a9a"></div>
<svg class="a" style="left:26px;top:447.29999999999995px;" width="9" height="9" viewBox="0 0 9 9"><rect x="0.5" y="0.5" width="8" height="8" fill="#f4f4f4" stroke="#9a9a9a" stroke-width="0.9"/><path d="M2 4.5 H7" stroke="#333" stroke-width="1.2"/><path d="M4.5 2 V7" stroke="#333" stroke-width="1.2"/></svg>
<svg class="a" style="left:41px;top:443.79999999999995px;" width="14" height="16" viewBox="0 0 14 16"><path d="M1 3.5 L4 0.7 H13 V12.5 L10 15.3 H1 Z" fill="#aaa6e2" stroke="#6b66a8" stroke-width="0.9"/><path d="M1 3.5 H10 V15.3 M10 3.5 L13 0.7" stroke="#6b66a8" fill="none" stroke-width="0.9"/><path d="M3 5 V14" stroke="#c9c6f0" stroke-width="1"/></svg>
<div class="t" style="left:60px;top:445.2px;font-size:11px;line-height:13.2px;color:#222;">Tuning_screw5</div>
<div class="t" style="left:-290px;width:600px;text-align:right;top:445.2px;font-size:11px;line-height:13.2px;color:#8a8a8a;text-decoration:underline;">Perfect conductor</div>
<svg class="a" style="left:316px;top:446.79999999999995px;" width="14" height="10" viewBox="0 0 14 10"><path d="M0.5 5 Q7 -2 13.5 5 Q7 12 0.5 5 Z" fill="#fff" stroke="#222" stroke-width="1.4"/><circle cx="7" cy="5" r="2.4" fill="#222"/></svg>
<svg class="a" style="left:332px;top:445.29999999999995px;" width="10" height="13" viewBox="0 0 10 13"><rect x="0" y="0" width="10" height="13" rx="1" fill="#222"/><rect x="1.7" y="1.7" width="6.6" height="2.2" fill="#fff"/><g fill="#fff"><rect x="1.7" y="5.3" width="1.6" height="1.4"/><rect x="4.2" y="5.3" width="1.6" height="1.4"/><rect x="6.7" y="5.3" width="1.6" height="1.4"/><rect x="1.7" y="7.7" width="1.6" height="1.4"/><rect x="4.2" y="7.7" width="1.6" height="1.4"/><rect x="6.7" y="7.7" width="1.6" height="1.4"/><rect x="1.7" y="10.1" width="1.6" height="1.4"/><rect x="4.2" y="10.1" width="1.6" height="1.4"/><rect x="6.7" y="10.1" width="1.6" height="1.4"/></g></svg>
<svg class="a" style="left:9px;top:464.19999999999993px;" width="9" height="9" viewBox="0 0 9 9"><rect x="0.5" y="0.5" width="8" height="8" fill="#f4f4f4" stroke="#9a9a9a" stroke-width="0.9"/><path d="M2 4.5 H7" stroke="#333" stroke-width="1.2"/></svg>
<div class="t" style="left:22.5px;top:462.1px;font-size:11px;line-height:13.2px;color:#222;">Coordinates</div>
<div class="a" style="left:30px;top:475px;width:0;height:11px;border-left:1px dotted #9a9a9a"></div>
<svg class="a" style="left:26px;top:481.1px;" width="9" height="9" viewBox="0 0 9 9"><rect x="0.5" y="0.5" width="8" height="8" fill="#f4f4f4" stroke="#9a9a9a" stroke-width="0.9"/><path d="M2 4.5 H7" stroke="#333" stroke-width="1.2"/></svg>
<svg class="a" style="left:41px;top:476.6px;" width="18" height="16" viewBox="0 0 18 16"><path d="M9 9 V1.5" stroke="#1a8a1a" stroke-width="1.3"/><circle cx="9" cy="1.5" r="1" fill="#1a8a1a"/><path d="M9 9 L2 13" stroke="#e02020" stroke-width="1.3"/><circle cx="2" cy="13" r="1.1" fill="#e02020"/><path d="M9 9 L16 13" stroke="#2020d0" stroke-width="1.3"/><circle cx="16" cy="13" r="1.1" fill="#2020d0"/></svg>
<div class="t" style="left:62px;top:479.0px;font-size:11px;line-height:13.2px;color:#222;">Global system</div>
<div class="a" style="left:47px;top:494px;width:0;height:118px;border-left:1px dotted #9a9a9a"></div>
<div class="a" style="left:47px;top:502.5px;width:10px;height:0;border-top:1px dotted #9a9a9a"></div>
<svg class="a" style="left:43px;top:498.0px;" width="9" height="9" viewBox="0 0 9 9"><rect x="0.5" y="0.5" width="8" height="8" fill="#f4f4f4" stroke="#9a9a9a" stroke-width="0.9"/><path d="M2 4.5 H7" stroke="#333" stroke-width="1.2"/></svg>
<svg class="a" style="left:57px;top:493.5px;" width="18" height="16" viewBox="0 0 18 16"><path d="M9 9 V1.5" stroke="#1a8a1a" stroke-width="1.3"/><circle cx="9" cy="1.5" r="1" fill="#1a8a1a"/><path d="M9 9 L2 13" stroke="#e02020" stroke-width="1.3"/><circle cx="2" cy="13" r="1.1" fill="#e02020"/><path d="M9 9 L16 13" stroke="#2020d0" stroke-width="1.3"/><circle cx="16" cy="13" r="1.1" fill="#2020d0"/></svg>
<div class="t" style="left:79px;top:495.9px;font-size:11px;line-height:13.2px;color:#222;">helix1</div>
<div class="a" style="left:63px;top:510px;width:0;height:26px;border-left:1px solid #9a9a9a"></div>
<div class="a" style="left:63px;top:519.4px;width:11px;height:0;border-top:1px dotted #9a9a9a"></div>
<svg class="a" style="left:74px;top:510.4px;" width="18" height="16" viewBox="0 0 18 16"><path d="M9 9 V1.5" stroke="#1a8a1a" stroke-width="1.3"/><circle cx="9" cy="1.5" r="1" fill="#1a8a1a"/><path d="M9 9 L2 13" stroke="#e02020" stroke-width="1.3"/><circle cx="2" cy="13" r="1.1" fill="#e02020"/><path d="M9 9 L16 13" stroke="#2020d0" stroke-width="1.3"/><circle cx="16" cy="13" r="1.1" fill="#2020d0"/></svg>
<div class="t" style="left:96px;top:512.8px;font-size:11px;line-height:13.2px;color:#222;">feed1</div>
<div class="a" style="left:63px;top:536.3px;width:11px;height:0;border-top:1px dotted #9a9a9a"></div>
<svg class="a" style="left:74px;top:527.3px;" width="18" height="16" viewBox="0 0 18 16"><path d="M9 9 V1.5" stroke="#1a8a1a" stroke-width="1.3"/><circle cx="9" cy="1.5" r="1" fill="#1a8a1a"/><path d="M9 9 L2 13" stroke="#e02020" stroke-width="1.3"/><circle cx="2" cy="13" r="1.1" fill="#e02020"/><path d="M9 9 L16 13" stroke="#2020d0" stroke-width="1.3"/><circle cx="16" cy="13" r="1.1" fill="#2020d0"/></svg>
<div class="t" style="left:96px;top:529.7px;font-size:11px;line-height:13.2px;color:#222;">System1</div>
<div class="a" style="left:47px;top:553.2px;width:10px;height:0;border-top:1px dotted #9a9a9a"></div>
<svg class="a" style="left:57px;top:544.1999999999999px;" width="18" height="16" viewBox="0 0 18 16"><path d="M9 9 V1.5" stroke="#1a8a1a" stroke-width="1.3"/><circle cx="9" cy="1.5" r="1" fill="#1a8a1a"/><path d="M9 9 L2 13" stroke="#e02020" stroke-width="1.3"/><circle cx="2" cy="13" r="1.1" fill="#e02020"/><path d="M9 9 L16 13" stroke="#2020d0" stroke-width="1.3"/><circle cx="16" cy="13" r="1.1" fill="#2020d0"/></svg>
<div class="t" style="left:79px;top:546.6px;font-size:11px;line-height:13.2px;color:#222;">helix2</div>
<div class="a" style="left:47px;top:570.1px;width:10px;height:0;border-top:1px dotted #9a9a9a"></div>
<svg class="a" style="left:57px;top:561.1px;" width="18" height="16" viewBox="0 0 18 16"><path d="M9 9 V1.5" stroke="#1a8a1a" stroke-width="1.3"/><circle cx="9" cy="1.5" r="1" fill="#1a8a1a"/><path d="M9 9 L2 13" stroke="#e02020" stroke-width="1.3"/><circle cx="2" cy="13" r="1.1" fill="#e02020"/><path d="M9 9 L16 13" stroke="#2020d0" stroke-width="1.3"/><circle cx="16" cy="13" r="1.1" fill="#2020d0"/></svg>
<div class="t" style="left:79px;top:563.5px;font-size:11px;line-height:13.2px;color:#222;font-weight:bold;">helix3</div>
<div class="a" style="left:47px;top:587.0px;width:10px;height:0;border-top:1px dotted #9a9a9a"></div>
<svg class="a" style="left:57px;top:578.0px;" width="18" height="16" viewBox="0 0 18 16"><path d="M9 9 V1.5" stroke="#1a8a1a" stroke-width="1.3"/><circle cx="9" cy="1.5" r="1" fill="#1a8a1a"/><path d="M9 9 L2 13" stroke="#e02020" stroke-width="1.3"/><circle cx="2" cy="13" r="1.1" fill="#e02020"/><path d="M9 9 L16 13" stroke="#2020d0" stroke-width="1.3"/><circle cx="16" cy="13" r="1.1" fill="#2020d0"/></svg>
<div class="t" style="left:79px;top:580.4px;font-size:11px;line-height:13.2px;color:#222;">helix4</div>
<div class="a" style="left:47px;top:603.9px;width:10px;height:0;border-top:1px dotted #9a9a9a"></div>
<svg class="a" style="left:43px;top:599.4px;" width="9" height="9" viewBox="0 0 9 9"><rect x="0.5" y="0.5" width="8" height="8" fill="#f4f4f4" stroke="#9a9a9a" stroke-width="0.9"/><path d="M2 4.5 H7" stroke="#333" stroke-width="1.2"/></svg>
<svg class="a" style="left:57px;top:594.9px;" width="18" height="16" viewBox="0 0 18 16"><path d="M9 9 V1.5" stroke="#1a8a1a" stroke-width="1.3"/><circle cx="9" cy="1.5" r="1" fill="#1a8a1a"/><path d="M9 9 L2 13" stroke="#e02020" stroke-width="1.3"/><circle cx="2" cy="13" r="1.1" fill="#e02020"/><path d="M9 9 L16 13" stroke="#2020d0" stroke-width="1.3"/><circle cx="16" cy="13" r="1.1" fill="#2020d0"/></svg>
<div class="t" style="left:79px;top:597.3px;font-size:11px;line-height:13.2px;color:#222;">helix5</div>
<div class="a" style="left:63px;top:612px;width:0;height:26px;border-left:1px solid #9a9a9a"></div>
<div class="a" style="left:63px;top:620.8px;width:11px;height:0;border-top:1px dotted #9a9a9a"></div>
<svg class="a" style="left:74px;top:611.8px;" width="18" height="16" viewBox="0 0 18 16"><path d="M9 9 V1.5" stroke="#1a8a1a" stroke-width="1.3"/><circle cx="9" cy="1.5" r="1" fill="#1a8a1a"/><path d="M9 9 L2 13" stroke="#e02020" stroke-width="1.3"/><circle cx="2" cy="13" r="1.1" fill="#e02020"/><path d="M9 9 L16 13" stroke="#2020d0" stroke-width="1.3"/><circle cx="16" cy="13" r="1.1" fill="#2020d0"/></svg>
<div class="t" style="left:96px;top:614.2px;font-size:11px;line-height:13.2px;color:#222;">feed2</div>
<div class="a" style="left:63px;top:637.7px;width:11px;height:0;border-top:1px dotted #9a9a9a"></div>
<svg class="a" style="left:74px;top:628.6999999999999px;" width="18" height="16" viewBox="0 0 18 16"><path d="M9 9 V1.5" stroke="#1a8a1a" stroke-width="1.3"/><circle cx="9" cy="1.5" r="1" fill="#1a8a1a"/><path d="M9 9 L2 13" stroke="#e02020" stroke-width="1.3"/><circle cx="2" cy="13" r="1.1" fill="#e02020"/><path d="M9 9 L16 13" stroke="#2020d0" stroke-width="1.3"/><circle cx="16" cy="13" r="1.1" fill="#2020d0"/></svg>
<div class="t" style="left:96px;top:631.1px;font-size:11px;line-height:13.2px;color:#222;">System2</div>
<svg class="a" style="left:9px;top:650.0999999999999px;" width="9" height="9" viewBox="0 0 9 9"><rect x="0.5" y="0.5" width="8" height="8" fill="#f4f4f4" stroke="#9a9a9a" stroke-width="0.9"/><path d="M2 4.5 H7" stroke="#333" stroke-width="1.2"/></svg>
<div class="t" style="left:22.5px;top:648.0px;font-size:11px;line-height:13.2px;color:#222;">Ports</div>
<div class="a" style="left:29px;top:660px;width:0;height:29px;border-left:1px solid #9a9a9a"></div>
<div class="a" style="left:29px;top:671.5px;width:10px;height:0;border-top:1px solid #9a9a9a"></div>
<svg class="a" style="left:39px;top:664.5px;" width="16" height="14" viewBox="0 0 16 14"><rect x="7" y="0" width="9" height="14" fill="#d42020"/><path d="M1 3 H9 M1 6 H9 M1 9 H9 M2 12 H9" stroke="#222" stroke-width="1.2"/><path d="M9 2 V13" stroke="#222" stroke-width="1.4"/></svg>
<div class="t" style="left:60px;top:664.9px;font-size:11px;line-height:13.2px;color:#222;">1) Feed1</div>
<div class="a" style="left:29px;top:688.4px;width:10px;height:0;border-top:1px solid #9a9a9a"></div>
<svg class="a" style="left:39px;top:681.4px;" width="16" height="14" viewBox="0 0 16 14"><rect x="7" y="0" width="9" height="14" fill="#d42020"/><path d="M1 3 H9 M1 6 H9 M1 9 H9 M2 12 H9" stroke="#222" stroke-width="1.2"/><path d="M9 2 V13" stroke="#222" stroke-width="1.4"/></svg>
<div class="t" style="left:60px;top:681.8px;font-size:11px;line-height:13.2px;color:#222;">2) Feed2</div>
<div class="t" style="left:22.5px;top:698.7px;font-size:11px;line-height:13.2px;color:#222;">Boundary conditions</div>
<svg class="a" style="left:9px;top:717.6999999999999px;" width="9" height="9" viewBox="0 0 9 9"><rect x="0.5" y="0.5" width="8" height="8" fill="#f4f4f4" stroke="#9a9a9a" stroke-width="0.9"/><path d="M2 4.5 H7" stroke="#333" stroke-width="1.2"/></svg>
<div class="t" style="left:22.5px;top:715.6px;font-size:11px;line-height:13.2px;color:#222;">Meshing</div>
<div class="a" style="left:29px;top:727px;width:0;height:12px;border-left:1px solid #9a9a9a"></div>
<div class="a" style="left:29px;top:739.1px;width:10px;height:0;border-top:1px solid #9a9a9a"></div>
<svg class="a" style="left:40px;top:732.0999999999999px;" width="14" height="14" viewBox="0 0 14 14"><path d="M1 3 L4 0.5 H13 V11 L10 13.5 H1 Z" fill="#8a5a3a" stroke="#4a2a1a" stroke-width="0.8"/><path d="M3 5 L8 10 M6 4 L11 9 M3 9 L6 12" stroke="#c08a5a" stroke-width="1"/></svg>
<div class="t" style="left:58px;top:732.5px;font-size:11px;line-height:13.2px;color:#222;">MeshRefinement1</div>
<div class="a" style="left:4px;top:753px;width:359px;height:398px;background:#fff;border:1px solid #d8d8dd"></div>
<div class="a" style="left:5px;top:754px;width:357px;height:24px;background:#efeff3"></div>
<div class="t" style="left:19px;top:758.4px;font-size:11px;line-height:13.2px;color:#555;">Parameters</div>
<div class="a" style="left:81px;top:762px;width:243px;height:7px;background-image:radial-gradient(circle,#a8a8b0 0.75px,transparent 1.15px),radial-gradient(circle,#a8a8b0 0.75px,transparent 1.15px);background-size:3.75px 7.5px;background-position:0 0,1.875px 3.75px;opacity:0.75"></div>
<svg class="a" style="left:332px;top:763px;" width="10" height="6" viewBox="0 0 10 6"><path d="M0 0 H10 L5 6 Z" fill="#222"/></svg>
<svg class="a" style="left:347px;top:759px;" width="9" height="15" viewBox="0 0 9 15"><path d="M2.6 1.2 H6.4 V8 H8.2 V9.4 H0.8 V8 H2.6 Z" fill="#f4f4f6" stroke="#222" stroke-width="1.2"/><path d="M4.5 9.5 V14" stroke="#222" stroke-width="1.3"/></svg>
<div class="a" style="left:5px;top:1109px;width:357px;height:42px;background:#dcdcdc;border-top:1px solid #cfcfcf"></div>
<div class="a" style="left:368px;top:149px;width:858px;height:24px;background:#ededf1"></div>
<div class="a" style="left:368px;top:149px;width:56px;height:24px;background:#6b61ad"></div>
<div class="a" style="left:368px;top:171px;width:858px;height:2px;background:#5d559e"></div>
<svg class="a" style="left:373px;top:153px;" width="16" height="16" viewBox="0 0 16 16"><path d="M1.5 4 L5 1 H14.5 V12 L11 15 H1.5 Z" fill="#cfcbf2" stroke="#3d3570" stroke-width="1"/><path d="M1.5 4 H11 V15 M11 4 L14.5 1" stroke="#3d3570" stroke-width="1" fill="none"/></svg>
<div class="t" style="left:390px;top:154.6px;font-size:11.5px;line-height:13.8px;color:#fff;">Scene</div>
<svg class="a" style="left:1214px;top:156px;" width="12" height="10" viewBox="0 0 12 10"><path d="M1 1 H11" stroke="#555" stroke-width="2"/><path d="M1 4 H11 L6 9 Z" fill="#555"/></svg>
<div class="a" style="left:368px;top:173px;width:858px;height:753px;background:#d4d4d4"></div>
<div class="a" style="left:368px;top:895px;width:858px;height:31px;background:#d5d5d5"></div>
<div class="t" style="left:609px;width:600px;text-align:right;top:905.9px;font-size:11px;line-height:13.2px;color:#222;">0 object(s) selected</div>
<svg class="a" style="left:1212px;top:908px;" width="9" height="7" viewBox="0 0 9 7"><path d="M0 7 H9 L4.5 0 Z" fill="#333"/></svg>
<svg class="a" style="left:369px;top:173px;overflow:hidden" width="857" height="722" viewBox="0 0 857 722"><defs>
<linearGradient id="bg" x1="0" y1="0" x2="0" y2="1"><stop offset="0" stop-color="#fdfdfd"/><stop offset="0.3" stop-color="#f3f3f3"/><stop offset="0.62" stop-color="#e2e2e2"/><stop offset="1" stop-color="#d2d2d2"/></linearGradient>
<linearGradient id="gridfade" x1="0" y1="173" x2="0" y2="895" gradientUnits="userSpaceOnUse"><stop offset="0" stop-color="#c8c8c8"/><stop offset="0.6" stop-color="#cdcdcd"/><stop offset="1" stop-color="#d2d2d2"/></linearGradient>
<linearGradient id="blueg" x1="0" y1="0" x2="1" y2="0"><stop offset="0" stop-color="#7272e0"/><stop offset="0.4" stop-color="#9898f2"/><stop offset="0.75" stop-color="#8c8cee"/><stop offset="1" stop-color="#6a6ad8"/></linearGradient>
<linearGradient id="pinkg" x1="0" y1="0" x2="1" y2="0"><stop offset="0" stop-color="#de7a7a"/><stop offset="0.28" stop-color="#f0a6a6"/><stop offset="0.6" stop-color="#f8c4c2"/><stop offset="1" stop-color="#e08282"/></linearGradient>
<linearGradient id="shade" x1="0" y1="0" x2="0" y2="1"><stop offset="0" stop-color="#fff" stop-opacity="0"/><stop offset="0.55" stop-color="#fff" stop-opacity="0.12"/><stop offset="1" stop-color="#7a2020" stop-opacity="0.18"/></linearGradient>
<linearGradient id="holeg" x1="0" y1="0" x2="0" y2="1"><stop offset="0" stop-color="#f0a8a8"/><stop offset="1" stop-color="#d27878"/></linearGradient>
<linearGradient id="rodg" x1="0" y1="0" x2="1" y2="0"><stop offset="0" stop-color="#e58a8a"/><stop offset="0.5" stop-color="#f6b6b4"/><stop offset="1" stop-color="#e58888"/></linearGradient>
<linearGradient id="wallg" x1="0" y1="0" x2="1" y2="0"><stop offset="0" stop-color="#bdbdbd"/><stop offset="0.1" stop-color="#dcdcdc"/><stop offset="0.45" stop-color="#f2f2f2"/><stop offset="0.9" stop-color="#dcdcdc"/><stop offset="1" stop-color="#c4c4c4"/></linearGradient>
<linearGradient id="topg" x1="0" y1="0" x2="1" y2="0"><stop offset="0" stop-color="#c0c0c0" stop-opacity="0.7"/><stop offset="0.2" stop-color="#dadada" stop-opacity="0.3"/><stop offset="0.65" stop-color="#f0f0f0" stop-opacity="0.08"/><stop offset="1" stop-color="#e2e2e2" stop-opacity="0.25"/></linearGradient>
<pattern id="mesh" width="8" height="14" patternUnits="userSpaceOnUse"><path d="M-2 0 L6 14 M6 0 L14 14 M10 0 L2 14 M2 0 L-6 14 M0 3.5 H8 M0 10.5 H8" stroke="#7a3434" stroke-width="0.45" stroke-opacity="0.4" fill="none"/></pattern>
<pattern id="meshb" width="16" height="28" patternUnits="userSpaceOnUse"><path d="M-4 0 L12 28 M12 0 L28 28 M20 0 L4 28 M4 0 L-12 28 M0 7 H16 M0 21 H16" stroke="#3a3a90" stroke-width="0.5" stroke-opacity="0.3" fill="none"/></pattern>
</defs><g transform="translate(-369 -173)"><rect x="369" y="173" width="857" height="722" fill="url(#bg)"/><line x1="368" y1="242.5" x2="502" y2="173" stroke="url(#gridfade)" stroke-width="1"/><line x1="368" y1="362.5" x2="707.6" y2="173" stroke="url(#gridfade)" stroke-width="1"/><line x1="368" y1="504.6" x2="915" y2="173" stroke="url(#gridfade)" stroke-width="1"/><line x1="368" y1="672" x2="1123" y2="173" stroke="url(#gridfade)" stroke-width="1"/><line x1="607" y1="895" x2="1226" y2="425" stroke="url(#gridfade)" stroke-width="1"/><line x1="910" y1="895" x2="1226" y2="636" stroke="url(#gridfade)" stroke-width="1"/><line x1="424" y1="173" x2="1226" y2="722" stroke="url(#gridfade)" stroke-width="1"/><line x1="636" y1="173" x2="1226" y2="550" stroke="url(#gridfade)" stroke-width="1"/><line x1="848" y1="173" x2="1226" y2="396" stroke="url(#gridfade)" stroke-width="1"/><line x1="1065" y1="173" x2="1226" y2="254" stroke="url(#gridfade)" stroke-width="1"/><line x1="368" y1="302.5" x2="1168" y2="895" stroke="url(#gridfade)" stroke-width="1"/><line x1="368" y1="476" x2="892" y2="895" stroke="url(#gridfade)" stroke-width="1"/><line x1="368" y1="702" x2="609" y2="895" stroke="url(#gridfade)" stroke-width="1"/><ellipse cx="905.0" cy="468.0" rx="94.0" ry="58.0" fill="#f0f0f0"/><ellipse cx="760.0" cy="585.0" rx="97.0" ry="66.0" fill="#f0f0f0"/><ellipse cx="968.0" cy="620.0" rx="103.0" ry="71.0" fill="#f0f0f0"/><ellipse cx="600.0" cy="702.0" rx="92.0" ry="68.0" fill="#f0f0f0"/><ellipse cx="813.0" cy="738.0" rx="99.0" ry="77.0" fill="#f0f0f0"/><path d="M985 352 L1000 348 L1012 380 L995 388 Z" fill="#e8e8e8" opacity="0.8"/><ellipse cx="1006.0" cy="363.0" rx="12.0" ry="17.0" fill="#efefef" stroke="#555" stroke-width="0.9" transform="rotate(-20 1006 363)"/><ellipse cx="1005.0" cy="365.0" rx="6.0" ry="9.0" fill="#f0b0b0" transform="rotate(-20 1005 365)"/><path d="M811.5 305 L811 468 A94 58 0 0 0 999 468 L1003.5 305 A96 60 0 0 1 811.5 305 Z" fill="#f4f4f4" opacity="0.45"/><path d="M811.5 305 L811 468 A94 58 0 0 0 999 468 L1003.5 305 A96 60 0 0 1 811.5 305 Z" fill="url(#wallg)" opacity="0.5"/><ellipse cx="907.5" cy="305.0" rx="96.0" ry="60.0" fill="url(#topg)"/><path d="M867 378 L945 378 L945 456.6 A39.0 23.4 0 0 1 867 456.6 Z" fill="url(#blueg)"/><ellipse cx="906.5" cy="427.6" rx="67.5" ry="30.4" fill="url(#pinkg)" stroke="#9a4c4c" stroke-width="1"/><ellipse cx="906.5" cy="427.6" rx="67.5" ry="30.4" fill="url(#shade)"/><path d="M843.7 421.3 A62.8 28.2 0 0 0 969.3 421.3" fill="none" stroke="#fbe0e0" stroke-width="4.2" opacity="0.33"/><ellipse cx="906.5" cy="427.6" rx="67.5" ry="30.4" fill="url(#mesh)"/><ellipse cx="906.5" cy="414.6" rx="67.5" ry="30.4" fill="url(#pinkg)" stroke="#9a4c4c" stroke-width="1"/><ellipse cx="906.5" cy="414.6" rx="67.5" ry="30.4" fill="url(#shade)"/><path d="M843.7 405.6 A62.8 28.2 0 0 0 969.3 405.6" fill="none" stroke="#fbe0e0" stroke-width="6.0" opacity="0.33"/><ellipse cx="906.5" cy="414.6" rx="67.5" ry="30.4" fill="url(#mesh)"/><ellipse cx="906.5" cy="394.6" rx="67.5" ry="30.4" fill="url(#pinkg)" stroke="#9a4c4c" stroke-width="1"/><ellipse cx="906.5" cy="394.6" rx="67.5" ry="30.4" fill="url(#shade)"/><path d="M843.7 384.3 A62.8 28.2 0 0 0 969.3 384.3" fill="none" stroke="#fbe0e0" stroke-width="6.9" opacity="0.33"/><ellipse cx="906.5" cy="394.6" rx="67.5" ry="30.4" fill="url(#mesh)"/><ellipse cx="906.5" cy="369.0" rx="67.5" ry="33.0" fill="url(#pinkg)" stroke="#9a4c4c" stroke-width="1"/><ellipse cx="906.5" cy="369.0" rx="67.5" ry="33.0" fill="url(#shade)"/><path d="M843.7 360.0 A62.8 30.7 0 0 0 969.3 360.0" fill="none" stroke="#fbe0e0" stroke-width="6.0" opacity="0.33"/><ellipse cx="906.5" cy="369.0" rx="67.5" ry="33.0" fill="url(#mesh)"/><ellipse cx="906.5" cy="364.5" rx="47.0" ry="23.5" fill="url(#holeg)" stroke="#b06868" stroke-width="0.7"/><ellipse cx="906.5" cy="364.5" rx="47.0" ry="23.5" fill="url(#mesh)"/><path d="M867 345.2 A39.0 23.4 0 0 1 945 345.2 L945 373.4 A39.0 19.5 0 0 1 867 373.4 Z" fill="url(#blueg)"/><ellipse cx="906.0" cy="345.2" rx="39.0" ry="23.4" fill="#a9a9f7"/><path d="M867 345.2 A39.0 23.4 0 0 1 945 345.2 L945 373.4 A39.0 19.5 0 0 1 867 373.4 Z" fill="url(#meshb)"/><path d="M888 303.5 L925 303.5 L925 347.0 A18.5 11.1 0 0 1 888 347.0 Z" fill="url(#rodg)" stroke="#b87070" stroke-width="0.6"/><path d="M888 303.5 L925 303.5 L925 347.0 A18.5 11.1 0 0 1 888 347.0 Z" fill="url(#mesh)"/><ellipse cx="907.0" cy="303.5" rx="19.6" ry="12.5" fill="#ee1010" stroke="#5a0000" stroke-width="1.1"/><path d="M890.3 300.4 L917.8 311.0 M904.1 291.6 L909.9 315.4 M921.7 296.6 L895.2 311.6 M897.2 293.5 L924.6 304.8" stroke="#7a0000" stroke-width="0.6"/><path d="M850.2 386.6 L897.7 393.9 L897.7 560 L850.2 560 Z" fill="#ebebeb" opacity="0.85"/><path d="M839.3 348 L839.3 366.5 L850.2 386.6 L897.7 393.9 L885 364.7 Z" fill="#a84848" opacity="0.45"/><path d="M839.3 348 L839.3 366.5 L850.2 386.6 L897.7 393.9 L885 364.7 M850.2 386.6 V560 M885 364.7 V560 M897.7 393.9 V560 M839.3 366.5 V430" stroke="#333" stroke-width="1" fill="none"/><path d="M653 408 L663 585 A97 66 0 0 0 857 585 L857 408 A102 68 0 0 1 653 408 Z" fill="#f4f4f4" opacity="0.45"/><path d="M653 408 L663 585 A97 66 0 0 0 857 585 L857 408 A102 68 0 0 1 653 408 Z" fill="url(#wallg)" opacity="0.5"/><ellipse cx="755.0" cy="408.0" rx="102.0" ry="68.0" fill="url(#topg)"/><path d="M716 490 L796.6 490 L796.6 575.0 A40.3 25.0 0 0 1 716 575.0 Z" fill="url(#blueg)"/><ellipse cx="755.5" cy="515.9" rx="72.5" ry="50.1" fill="url(#pinkg)" stroke="#9a4c4c" stroke-width="1"/><ellipse cx="755.5" cy="515.9" rx="72.5" ry="50.1" fill="url(#shade)"/><path d="M688.1 509.6 A67.4 46.6 0 0 0 822.9 509.6" fill="none" stroke="#fbe0e0" stroke-width="4.2" opacity="0.33"/><ellipse cx="755.5" cy="515.9" rx="72.5" ry="50.1" fill="url(#mesh)"/><ellipse cx="755.5" cy="501.9" rx="72.5" ry="50.1" fill="url(#pinkg)" stroke="#9a4c4c" stroke-width="1"/><ellipse cx="755.5" cy="501.9" rx="72.5" ry="50.1" fill="url(#shade)"/><path d="M688.1 495.1 A67.4 46.6 0 0 0 822.9 495.1" fill="none" stroke="#fbe0e0" stroke-width="4.5" opacity="0.33"/><ellipse cx="755.5" cy="501.9" rx="72.5" ry="50.1" fill="url(#mesh)"/><ellipse cx="755.5" cy="486.9" rx="72.5" ry="50.1" fill="url(#pinkg)" stroke="#9a4c4c" stroke-width="1"/><ellipse cx="755.5" cy="486.9" rx="72.5" ry="50.1" fill="url(#shade)"/><path d="M688.1 477.4 A67.4 46.6 0 0 0 822.9 477.4" fill="none" stroke="#fbe0e0" stroke-width="6.3" opacity="0.33"/><ellipse cx="755.5" cy="486.9" rx="72.5" ry="50.1" fill="url(#mesh)"/><ellipse cx="755.5" cy="461.5" rx="72.5" ry="54.5" fill="url(#pinkg)" stroke="#9a4c4c" stroke-width="1"/><ellipse cx="755.5" cy="461.5" rx="72.5" ry="54.5" fill="url(#shade)"/><path d="M688.1 451.6 A67.4 50.7 0 0 0 822.9 451.6" fill="none" stroke="#fbe0e0" stroke-width="6.6" opacity="0.33"/><ellipse cx="755.5" cy="461.5" rx="72.5" ry="54.5" fill="url(#mesh)"/><ellipse cx="755.5" cy="472.9" rx="49.3" ry="27.1" fill="url(#holeg)" stroke="#b06868" stroke-width="0.7"/><ellipse cx="755.5" cy="472.9" rx="49.3" ry="27.1" fill="url(#mesh)"/><path d="M716 441.5 A40.3 25.0 0 0 1 796.6 441.5 L796.6 483.4 A40.3 22.2 0 0 1 716 483.4 Z" fill="url(#blueg)"/><ellipse cx="756.3" cy="441.5" rx="40.3" ry="25.0" fill="#a9a9f7"/><path d="M716 441.5 A40.3 25.0 0 0 1 796.6 441.5 L796.6 483.4 A40.3 22.2 0 0 1 716 483.4 Z" fill="url(#meshb)"/><path d="M736 405 L774 405 L774 443.8 A19.0 11.4 0 0 1 736 443.8 Z" fill="url(#rodg)" stroke="#b87070" stroke-width="0.6"/><path d="M736 405 L774 405 L774 443.8 A19.0 11.4 0 0 1 736 443.8 Z" fill="url(#mesh)"/><ellipse cx="754.4" cy="405.0" rx="20.3" ry="13.5" fill="#ee1010" stroke="#5a0000" stroke-width="1.1"/><path d="M737.1 401.6 L765.6 413.1 M751.4 392.2 L757.4 417.8 M769.6 397.6 L742.2 413.8 M744.2 394.2 L772.7 406.4" stroke="#7a0000" stroke-width="0.6"/><path d="M683 497 L735 505 L745 600 L690 590 Z" fill="#ececec" opacity="0.85"/><path d="M683 460 Q700 485 735 478 L745 500 M735 505 L745 600 M690 497 L690 590" stroke="#555" stroke-width="0.9" fill="none"/><path d="M683 460 Q700 485 735 478 L745 500 L683 497 Z" fill="#b04848" opacity="0.45"/><path d="M868 445 L865 620 A103 71 0 0 0 1071 620 L1074 445 A103 66 0 0 1 868 445 Z" fill="#f4f4f4" opacity="0.45"/><path d="M868 445 L865 620 A103 71 0 0 0 1071 620 L1074 445 A103 66 0 0 1 868 445 Z" fill="url(#wallg)" opacity="0.5"/><ellipse cx="971.0" cy="445.0" rx="103.0" ry="66.0" fill="url(#topg)"/><path d="M923 528 L1000.5 528 L1000.5 625.0 A38.8 24.0 0 0 1 923 625.0 Z" fill="url(#blueg)"/><ellipse cx="968.5" cy="570.5" rx="74.5" ry="51.5" fill="url(#pinkg)" stroke="#9a4c4c" stroke-width="1"/><ellipse cx="968.5" cy="570.5" rx="74.5" ry="51.5" fill="url(#shade)"/><path d="M899.2 564.2 A69.3 47.9 0 0 0 1037.8 564.2" fill="none" stroke="#fbe0e0" stroke-width="4.2" opacity="0.33"/><ellipse cx="968.5" cy="570.5" rx="74.5" ry="51.5" fill="url(#mesh)"/><ellipse cx="968.5" cy="559.5" rx="74.5" ry="51.5" fill="url(#pinkg)" stroke="#9a4c4c" stroke-width="1"/><ellipse cx="968.5" cy="559.5" rx="74.5" ry="51.5" fill="url(#shade)"/><path d="M899.2 548.7 A69.3 47.9 0 0 0 1037.8 548.7" fill="none" stroke="#fbe0e0" stroke-width="7.2" opacity="0.33"/><ellipse cx="968.5" cy="559.5" rx="74.5" ry="51.5" fill="url(#mesh)"/><ellipse cx="968.5" cy="535.5" rx="74.5" ry="51.5" fill="url(#pinkg)" stroke="#9a4c4c" stroke-width="1"/><ellipse cx="968.5" cy="535.5" rx="74.5" ry="51.5" fill="url(#shade)"/><path d="M899.2 522.9 A69.3 47.9 0 0 0 1037.8 522.9" fill="none" stroke="#fbe0e0" stroke-width="8.4" opacity="0.33"/><ellipse cx="968.5" cy="535.5" rx="74.5" ry="51.5" fill="url(#mesh)"/><ellipse cx="968.5" cy="503.0" rx="74.5" ry="56.0" fill="url(#pinkg)" stroke="#9a4c4c" stroke-width="1"/><ellipse cx="968.5" cy="503.0" rx="74.5" ry="56.0" fill="url(#shade)"/><path d="M899.2 490.9 A69.3 52.1 0 0 0 1037.8 490.9" fill="none" stroke="#fbe0e0" stroke-width="8.1" opacity="0.33"/><ellipse cx="968.5" cy="503.0" rx="74.5" ry="56.0" fill="url(#mesh)"/><ellipse cx="968.5" cy="508.5" rx="50.8" ry="29.5" fill="url(#holeg)" stroke="#b06868" stroke-width="0.7"/><ellipse cx="968.5" cy="508.5" rx="50.8" ry="29.5" fill="url(#mesh)"/><path d="M926.7 478.4 A41.6 25.8 0 0 1 1010 478.4 L1010 519.9 A41.6 24.2 0 0 1 926.7 519.9 Z" fill="url(#blueg)"/><ellipse cx="968.4" cy="478.4" rx="41.6" ry="25.8" fill="#a9a9f7"/><path d="M926.7 478.4 A41.6 25.8 0 0 1 1010 478.4 L1010 519.9 A41.6 24.2 0 0 1 926.7 519.9 Z" fill="url(#meshb)"/><path d="M950 442.5 L992 442.5 L992 480.0 A21.0 12.6 0 0 1 950 480.0 Z" fill="url(#rodg)" stroke="#b87070" stroke-width="0.6"/><path d="M950 442.5 L992 442.5 L992 480.0 A21.0 12.6 0 0 1 950 480.0 Z" fill="url(#mesh)"/><ellipse cx="971.0" cy="442.5" rx="21.0" ry="14.3" fill="#ee1010" stroke="#5a0000" stroke-width="1.1"/><path d="M953.1 438.9 L982.5 451.1 M967.9 428.9 L974.1 456.1 M986.8 434.6 L958.4 451.8 M960.5 431.1 L989.9 443.9" stroke="#7a0000" stroke-width="0.6"/><path d="M477 518 L508 702 A92 68 0 0 0 692 702 L683 518 A103 75 0 0 1 477 518 Z" fill="#f4f4f4" opacity="0.45"/><path d="M477 518 L508 702 A92 68 0 0 0 692 702 L683 518 A103 75 0 0 1 477 518 Z" fill="url(#wallg)" opacity="0.5"/><ellipse cx="580.0" cy="518.0" rx="103.0" ry="75.0" fill="url(#topg)"/><path d="M672 651 L583 715" stroke="#f04848" stroke-width="9" opacity="0.55"/><path d="M570 593 L648.5 593 L648.5 698.1 A39.2 25.9 0 0 1 570 698.1 Z" fill="url(#blueg)"/><ellipse cx="593.5" cy="661.5" rx="79.5" ry="45.5" fill="url(#pinkg)" stroke="#9a4c4c" stroke-width="1"/><ellipse cx="593.5" cy="661.5" rx="79.5" ry="45.5" fill="url(#shade)"/><path d="M519.6 648.0 A73.9 42.4 0 0 0 667.4 648.0" fill="none" stroke="#fbe0e0" stroke-width="9.0" opacity="0.33"/><ellipse cx="593.5" cy="661.5" rx="79.5" ry="45.5" fill="url(#mesh)"/><ellipse cx="593.5" cy="631.5" rx="79.5" ry="45.5" fill="url(#pinkg)" stroke="#9a4c4c" stroke-width="1"/><ellipse cx="593.5" cy="631.5" rx="79.5" ry="45.5" fill="url(#shade)"/><path d="M519.6 618.4 A73.9 42.4 0 0 0 667.4 618.4" fill="none" stroke="#fbe0e0" stroke-width="8.7" opacity="0.33"/><ellipse cx="593.5" cy="631.5" rx="79.5" ry="45.5" fill="url(#mesh)"/><ellipse cx="593.5" cy="602.5" rx="79.5" ry="45.5" fill="url(#pinkg)" stroke="#9a4c4c" stroke-width="1"/><ellipse cx="593.5" cy="602.5" rx="79.5" ry="45.5" fill="url(#shade)"/><path d="M519.6 589.0 A73.9 42.4 0 0 0 667.4 589.0" fill="none" stroke="#fbe0e0" stroke-width="9.0" opacity="0.33"/><ellipse cx="593.5" cy="602.5" rx="79.5" ry="45.5" fill="url(#mesh)"/><ellipse cx="593.5" cy="568.5" rx="79.5" ry="49.5" fill="url(#pinkg)" stroke="#9a4c4c" stroke-width="1"/><ellipse cx="593.5" cy="568.5" rx="79.5" ry="49.5" fill="url(#shade)"/><path d="M519.6 559.0 A73.9 46.0 0 0 0 667.4 559.0" fill="none" stroke="#fbe0e0" stroke-width="6.3" opacity="0.33"/><ellipse cx="593.5" cy="568.5" rx="79.5" ry="49.5" fill="url(#mesh)"/><ellipse cx="593.5" cy="570.0" rx="55.0" ry="33.0" fill="url(#holeg)" stroke="#b06868" stroke-width="0.7"/><ellipse cx="593.5" cy="570.0" rx="55.0" ry="33.0" fill="url(#mesh)"/><path d="M547 559.0 A45.5 30.0 0 0 1 638 559.0 L638 582.5 A45.5 27.3 0 0 1 547 582.5 Z" fill="url(#blueg)"/><ellipse cx="592.5" cy="559.0" rx="45.5" ry="30.0" fill="#a9a9f7"/><path d="M547 559.0 A45.5 30.0 0 0 1 638 559.0 L638 582.5 A45.5 27.3 0 0 1 547 582.5 Z" fill="url(#meshb)"/><path d="M565 516 L607 516 L607 562.9 A21.0 12.6 0 0 1 565 562.9 Z" fill="url(#rodg)" stroke="#b87070" stroke-width="0.6"/><path d="M565 516 L607 516 L607 562.9 A21.0 12.6 0 0 1 565 562.9 Z" fill="url(#mesh)"/><ellipse cx="584.0" cy="516.0" rx="21.0" ry="16.0" fill="#ee1010" stroke="#5a0000" stroke-width="1.1"/><path d="M566.1 512.0 L595.5 525.6 M580.9 500.8 L587.1 531.2 M599.8 507.2 L571.4 526.4 M573.5 503.2 L602.9 517.6" stroke="#7a0000" stroke-width="0.6"/><path d="M707 561 L714 738 A99 77 0 0 0 912 738 L917 561 A105 77 0 0 1 707 561 Z" fill="#f4f4f4" opacity="0.45"/><path d="M707 561 L714 738 A99 77 0 0 0 912 738 L917 561 A105 77 0 0 1 707 561 Z" fill="url(#wallg)" opacity="0.5"/><ellipse cx="812.0" cy="561.0" rx="105.0" ry="77.0" fill="url(#topg)"/><path d="M773 648 L853.5 648 L853.5 740.4 A40.2 26.6 0 0 1 773 740.4 Z" fill="url(#blueg)"/><ellipse cx="810.0" cy="683.6" rx="79.0" ry="58.4" fill="url(#pinkg)" stroke="#9a4c4c" stroke-width="1"/><ellipse cx="810.0" cy="683.6" rx="79.0" ry="58.4" fill="url(#shade)"/><path d="M736.5 677.3 A73.5 54.3 0 0 0 883.5 677.3" fill="none" stroke="#fbe0e0" stroke-width="4.2" opacity="0.33"/><ellipse cx="810.0" cy="683.6" rx="79.0" ry="58.4" fill="url(#mesh)"/><ellipse cx="810.0" cy="671.6" rx="79.0" ry="58.4" fill="url(#pinkg)" stroke="#9a4c4c" stroke-width="1"/><ellipse cx="810.0" cy="671.6" rx="79.0" ry="58.4" fill="url(#shade)"/><path d="M736.5 660.8 A73.5 54.3 0 0 0 883.5 660.8" fill="none" stroke="#fbe0e0" stroke-width="7.2" opacity="0.33"/><ellipse cx="810.0" cy="671.6" rx="79.0" ry="58.4" fill="url(#mesh)"/><ellipse cx="810.0" cy="647.6" rx="79.0" ry="58.4" fill="url(#pinkg)" stroke="#9a4c4c" stroke-width="1"/><ellipse cx="810.0" cy="647.6" rx="79.0" ry="58.4" fill="url(#shade)"/><path d="M736.5 636.8 A73.5 54.3 0 0 0 883.5 636.8" fill="none" stroke="#fbe0e0" stroke-width="7.2" opacity="0.33"/><ellipse cx="810.0" cy="647.6" rx="79.0" ry="58.4" fill="url(#mesh)"/><ellipse cx="810.0" cy="618.5" rx="79.0" ry="63.5" fill="url(#pinkg)" stroke="#9a4c4c" stroke-width="1"/><ellipse cx="810.0" cy="618.5" rx="79.0" ry="63.5" fill="url(#shade)"/><path d="M736.5 605.0 A73.5 59.1 0 0 0 883.5 605.0" fill="none" stroke="#fbe0e0" stroke-width="9.0" opacity="0.33"/><ellipse cx="810.0" cy="618.5" rx="79.0" ry="63.5" fill="url(#mesh)"/><ellipse cx="810.0" cy="626.0" rx="53.4" ry="32.0" fill="url(#holeg)" stroke="#b06868" stroke-width="0.7"/><ellipse cx="810.0" cy="626.0" rx="53.4" ry="32.0" fill="url(#mesh)"/><path d="M766.7 594.6 A43.4 28.6 0 0 1 853.5 594.6 L853.5 638.5 A43.4 26.0 0 0 1 766.7 638.5 Z" fill="url(#blueg)"/><ellipse cx="810.1" cy="594.6" rx="43.4" ry="28.6" fill="#a9a9f7"/><path d="M766.7 594.6 A43.4 28.6 0 0 1 853.5 594.6 L853.5 638.5 A43.4 26.0 0 0 1 766.7 638.5 Z" fill="url(#meshb)"/><path d="M787 558.5 L831 558.5 L831 597.2 A22.0 13.2 0 0 1 787 597.2 Z" fill="url(#rodg)" stroke="#b87070" stroke-width="0.6"/><path d="M787 558.5 L831 558.5 L831 597.2 A22.0 13.2 0 0 1 787 597.2 Z" fill="url(#mesh)"/><ellipse cx="809.0" cy="558.5" rx="22.0" ry="16.0" fill="#ee1010" stroke="#5a0000" stroke-width="1.1"/><path d="M790.3 554.5 L821.1 568.1 M805.7 543.3 L812.3 573.7 M825.5 549.7 L795.8 568.9 M798.0 545.7 L828.8 560.1" stroke="#7a0000" stroke-width="0.6"/><ellipse cx="907.5" cy="305.0" rx="96.0" ry="60.0" fill="none" stroke="#303030" stroke-width="1.1"/><path d="M839.0 446.6 A102 68 0 1 1 839.0 369.4" fill="none" stroke="#303030" stroke-width="1.1"/><path d="M989.9 380.1 A103 66 0 1 1 892.1 487.4" fill="none" stroke="#303030" stroke-width="1.1"/><path d="M656.5 568.2 A103 75 0 1 1 683 518" fill="none" stroke="#303030" stroke-width="1.1"/><ellipse cx="812.0" cy="561.0" rx="105.0" ry="77.0" fill="none" stroke="#303030" stroke-width="1.1"/><line x1="811.5" y1="305" x2="811" y2="430" stroke="#3a3a3a" stroke-width="1"/><line x1="1003.5" y1="305" x2="1002" y2="345" stroke="#3a3a3a" stroke-width="1"/><line x1="976.5" y1="349" x2="990" y2="376" stroke="#3a3a3a" stroke-width="1"/><line x1="990" y1="376" x2="990" y2="432" stroke="#3a3a3a" stroke-width="1"/><line x1="653" y1="408" x2="655" y2="500" stroke="#3a3a3a" stroke-width="1"/><line x1="1074" y1="445" x2="1071" y2="620" stroke="#3a3a3a" stroke-width="1"/><line x1="477" y1="518" x2="508" y2="702" stroke="#3a3a3a" stroke-width="1"/><line x1="707" y1="561" x2="714" y2="738" stroke="#3a3a3a" stroke-width="1"/><line x1="917" y1="561" x2="912" y2="738" stroke="#3a3a3a" stroke-width="1"/><path d="M508 702 A92 68 0 0 0 692 702" fill="none" stroke="#3a3a3a" stroke-width="1"/><path d="M865 620 A103 71 0 0 0 1071 620" fill="none" stroke="#3a3a3a" stroke-width="1"/><path d="M714 738 A99 77 0 0 0 912 738" fill="none" stroke="#3a3a3a" stroke-width="1"/><path d="M666 569 L702 579 L712 713 L669 700 Z" fill="#f4f4f4" opacity="0.55" stroke="#333" stroke-width="1"/><path d="M817.4 457.8 L826.5 452.3 L871.2 460.5 L871.2 497 L826.5 483.3 Z" fill="#f0f0f0" opacity="0.45" stroke="#333" stroke-width="1"/><path d="M726 612 L671 651.5" stroke="#f05050" stroke-width="9" opacity="0.42"/><path d="M583 715 L540 746" stroke="#ff3030" stroke-width="10" opacity="0.6"/><path d="M540 746 L522 757" stroke="#ff0a0a" stroke-width="10"/><path d="M471.5 791 L514.5 742.5 L519 750 L527 762 L532.5 769 Z" fill="#ff0a0a"/><path d="M889 670 L913 697" stroke="#40b040" stroke-width="13" opacity="0.35"/><path d="M913 697 L991 751" stroke="#12b012" stroke-width="14"/><path d="M1041.5 790 L983 764.5 L988 757 L994 750 L998.5 742 Z" fill="#0fae0f"/><path d="M751 350 L753 401" stroke="#0808f0" stroke-width="13" stroke-linecap="round"/><path d="M748.7 295.3 L737 345 Q737 356 750.5 356 Q764 356 765 345 Z" fill="#0808f0"/><path d="M969 305 L961.5 330 Q968 337 975 330 Z" fill="#8585f4" opacity="0.85"/><path d="M968.5 332 L968.5 340" stroke="#9a9aff" stroke-width="6" opacity="0.7"/><path d="M1040 486 L1075 512" stroke="#50c050" stroke-width="4" opacity="0.5"/><path d="M1097 528 L1068 521 L1080 506 Z" fill="#10a010"/><path d="M454.3 724.2 L514.5 684 L540.3 722.3 L483 760.5 Z" fill="#f4f4f4" opacity="0.9"/><path d="M454.3 724.2 L514.5 684 M540.3 722.3 L483 760.5" stroke="#3a3a3a" stroke-width="1"/><path d="M464 731 L545 681 L554 698 L475 745 Z" fill="#f0a0a0"/><path d="M464 731 L545 681 L554 698 L475 745 Z" fill="url(#mesh)"/><ellipse cx="527.0" cy="703.0" rx="9.0" ry="19.5" fill="none" stroke="#3a3a3a" stroke-width="1" transform="rotate(-34 527 703)"/><ellipse cx="468.7" cy="742.0" rx="9.5" ry="19.5" fill="#e4e4e4" stroke="#3a3a3a" stroke-width="1" transform="rotate(-34 468.7 742)"/><ellipse cx="469.0" cy="741.0" rx="6.0" ry="10.0" fill="#b01010" stroke="#600" stroke-width="0.6" transform="rotate(-34 469 741)"/></g></svg>
<div class="a" style="left:369px;top:894px;width:857px;height:1px;background:#c6c6c6"></div>
<div class="a" style="left:1225px;top:173px;width:1px;height:722px;background:#d0d0d0"></div>
<div class="a" style="left:369px;top:173px;width:1px;height:722px;background:#e6e6e6"></div>
<div class="t" style="left:462px;top:794.0px;font-size:12.5px;line-height:15.0px;color:#ee1111;font-weight:bold;">X</div>
<div class="t" style="left:833px;top:530.3px;font-size:12px;line-height:14.4px;color:#ee1111;font-weight:bold;">X</div>
<div class="t" style="left:1033px;top:794.0px;font-size:12.5px;line-height:15.0px;color:#119911;font-weight:bold;">Y</div>
<div class="t" style="left:1087px;top:528.3px;font-size:12px;line-height:14.4px;color:#119911;font-weight:bold;">Y</div>
<div class="t" style="left:739px;top:295.5px;font-size:12.5px;line-height:15.0px;color:#1111dd;font-weight:bold;">Z</div>
<div class="t" style="left:958px;top:308.0px;font-size:12.5px;line-height:15.0px;color:#2a2ae6;font-weight:bold;">Z</div>
<div class="a" style="left:1232px;top:149px;width:662px;height:24px;background:#ededf1"></div>
<div class="a" style="left:1232px;top:149px;width:92px;height:24px;background:#d3d3dc"></div>
<svg class="a" style="left:1236px;top:152px;" width="16" height="16" viewBox="0 0 16 16"><rect x="0.5" y="0.5" width="15" height="15" fill="#fff" stroke="#333" stroke-width="1"/><path d="M1 12 Q5 6 8 10 Q11 13 15 4" stroke="#4a3fc0" stroke-width="1.3" fill="none"/></svg>
<div class="t" style="left:1255px;top:154.4px;font-size:11px;line-height:13.2px;color:#666;">RectPlot1</div>
<svg class="a" style="left:1311px;top:156px;" width="9" height="9" viewBox="0 0 9 9"><path d="M1 1 L8 8 M8 1 L1 8" stroke="#fff" stroke-width="1.5"/></svg>
<svg class="a" style="left:1883px;top:155px;" width="12" height="10" viewBox="0 0 12 10"><path d="M1 1 H11" stroke="#555" stroke-width="2"/><path d="M1 4 H11 L6 9 Z" fill="#555"/></svg>
<div class="a" style="left:1232px;top:173px;width:662px;height:753px;background:#fff;border:1px solid #e3e3e8"></div>
<svg class="a" style="left:0px;top:0px;pointer-events:none" width="1920" height="1151" viewBox="0 0 1920 1151"><line x1="1321.8" y1="221.4" x2="1321.8" y2="871.6" stroke="#dcdcdc" stroke-width="1"/><line x1="1364.1" y1="221.4" x2="1364.1" y2="871.6" stroke="#dcdcdc" stroke-width="1"/><line x1="1406.4" y1="221.4" x2="1406.4" y2="871.6" stroke="#dcdcdc" stroke-width="1"/><line x1="1448.6" y1="221.4" x2="1448.6" y2="871.6" stroke="#dcdcdc" stroke-width="1"/><line x1="1490.9" y1="221.4" x2="1490.9" y2="871.6" stroke="#dcdcdc" stroke-width="1"/><line x1="1533.2" y1="221.4" x2="1533.2" y2="871.6" stroke="#dcdcdc" stroke-width="1"/><line x1="1575.5" y1="221.4" x2="1575.5" y2="871.6" stroke="#dcdcdc" stroke-width="1"/><line x1="1617.8" y1="221.4" x2="1617.8" y2="871.6" stroke="#dcdcdc" stroke-width="1"/><line x1="1660.1" y1="221.4" x2="1660.1" y2="871.6" stroke="#dcdcdc" stroke-width="1"/><line x1="1702.4" y1="221.4" x2="1702.4" y2="871.6" stroke="#dcdcdc" stroke-width="1"/><line x1="1744.6" y1="221.4" x2="1744.6" y2="871.6" stroke="#dcdcdc" stroke-width="1"/><line x1="1786.9" y1="221.4" x2="1786.9" y2="871.6" stroke="#dcdcdc" stroke-width="1"/><line x1="1829.2" y1="221.4" x2="1829.2" y2="871.6" stroke="#dcdcdc" stroke-width="1"/><line x1="1279.5" y1="264.0" x2="1871.5" y2="264.0" stroke="#dcdcdc" stroke-width="1"/><line x1="1279.5" y1="306.5" x2="1871.5" y2="306.5" stroke="#dcdcdc" stroke-width="1"/><line x1="1279.5" y1="349.1" x2="1871.5" y2="349.1" stroke="#dcdcdc" stroke-width="1"/><line x1="1279.5" y1="391.7" x2="1871.5" y2="391.7" stroke="#dcdcdc" stroke-width="1"/><line x1="1279.5" y1="434.2" x2="1871.5" y2="434.2" stroke="#dcdcdc" stroke-width="1"/><line x1="1279.5" y1="476.8" x2="1871.5" y2="476.8" stroke="#dcdcdc" stroke-width="1"/><line x1="1279.5" y1="519.4" x2="1871.5" y2="519.4" stroke="#dcdcdc" stroke-width="1"/><line x1="1279.5" y1="562.0" x2="1871.5" y2="562.0" stroke="#dcdcdc" stroke-width="1"/><line x1="1279.5" y1="604.5" x2="1871.5" y2="604.5" stroke="#dcdcdc" stroke-width="1"/><line x1="1279.5" y1="647.1" x2="1871.5" y2="647.1" stroke="#dcdcdc" stroke-width="1"/><line x1="1279.5" y1="689.7" x2="1871.5" y2="689.7" stroke="#dcdcdc" stroke-width="1"/><line x1="1279.5" y1="732.2" x2="1871.5" y2="732.2" stroke="#dcdcdc" stroke-width="1"/><line x1="1279.5" y1="774.8" x2="1871.5" y2="774.8" stroke="#dcdcdc" stroke-width="1"/><line x1="1279.5" y1="817.4" x2="1871.5" y2="817.4" stroke="#dcdcdc" stroke-width="1"/><line x1="1279.5" y1="859.9" x2="1871.5" y2="859.9" stroke="#dcdcdc" stroke-width="1"/><path d="M1279.5 221.4 V871.6 H1871.5 V221.4" stroke="#222" stroke-width="1.6" fill="none"/><line x1="1279.5" y1="871.6" x2="1279.5" y2="875" stroke="#222" stroke-width="1"/><line x1="1321.8" y1="871.6" x2="1321.8" y2="875" stroke="#222" stroke-width="1"/><line x1="1364.1" y1="871.6" x2="1364.1" y2="875" stroke="#222" stroke-width="1"/><line x1="1406.4" y1="871.6" x2="1406.4" y2="875" stroke="#222" stroke-width="1"/><line x1="1448.6" y1="871.6" x2="1448.6" y2="875" stroke="#222" stroke-width="1"/><line x1="1490.9" y1="871.6" x2="1490.9" y2="875" stroke="#222" stroke-width="1"/><line x1="1533.2" y1="871.6" x2="1533.2" y2="875" stroke="#222" stroke-width="1"/><line x1="1575.5" y1="871.6" x2="1575.5" y2="875" stroke="#222" stroke-width="1"/><line x1="1617.8" y1="871.6" x2="1617.8" y2="875" stroke="#222" stroke-width="1"/><line x1="1660.1" y1="871.6" x2="1660.1" y2="875" stroke="#222" stroke-width="1"/><line x1="1702.4" y1="871.6" x2="1702.4" y2="875" stroke="#222" stroke-width="1"/><line x1="1744.6" y1="871.6" x2="1744.6" y2="875" stroke="#222" stroke-width="1"/><line x1="1786.9" y1="871.6" x2="1786.9" y2="875" stroke="#222" stroke-width="1"/><line x1="1829.2" y1="871.6" x2="1829.2" y2="875" stroke="#222" stroke-width="1"/><line x1="1871.5" y1="871.6" x2="1871.5" y2="875" stroke="#222" stroke-width="1"/><line x1="1276.5" y1="264.0" x2="1279.5" y2="264.0" stroke="#222" stroke-width="1"/><line x1="1276.5" y1="306.5" x2="1279.5" y2="306.5" stroke="#222" stroke-width="1"/><line x1="1276.5" y1="349.1" x2="1279.5" y2="349.1" stroke="#222" stroke-width="1"/><line x1="1276.5" y1="391.7" x2="1279.5" y2="391.7" stroke="#222" stroke-width="1"/><line x1="1276.5" y1="434.2" x2="1279.5" y2="434.2" stroke="#222" stroke-width="1"/><line x1="1276.5" y1="476.8" x2="1279.5" y2="476.8" stroke="#222" stroke-width="1"/><line x1="1276.5" y1="519.4" x2="1279.5" y2="519.4" stroke="#222" stroke-width="1"/><line x1="1276.5" y1="562.0" x2="1279.5" y2="562.0" stroke="#222" stroke-width="1"/><line x1="1276.5" y1="604.5" x2="1279.5" y2="604.5" stroke="#222" stroke-width="1"/><line x1="1276.5" y1="647.1" x2="1279.5" y2="647.1" stroke="#222" stroke-width="1"/><line x1="1276.5" y1="689.7" x2="1279.5" y2="689.7" stroke="#222" stroke-width="1"/><line x1="1276.5" y1="732.2" x2="1279.5" y2="732.2" stroke="#222" stroke-width="1"/><line x1="1276.5" y1="774.8" x2="1279.5" y2="774.8" stroke="#222" stroke-width="1"/><line x1="1276.5" y1="817.4" x2="1279.5" y2="817.4" stroke="#222" stroke-width="1"/><line x1="1276.5" y1="859.9" x2="1279.5" y2="859.9" stroke="#222" stroke-width="1"/><path d="M1280.0 221.6 C1315.7 221.6 1457.8 221.5 1494.0 221.6 C1530.2 221.7 1496.6 221.6 1497.5 222.0 C1498.4 222.4 1498.9 222.7 1499.5 224.0 C1500.1 225.3 1500.5 223.7 1500.9 230.0 C1501.3 236.3 1501.6 249.7 1501.9 262.0 C1502.2 274.3 1502.6 291.2 1503.0 304.0 C1503.4 316.8 1503.8 338.5 1504.3 338.7 C1504.8 338.9 1505.1 304.8 1506.0 305.3 C1506.9 305.9 1508.4 340.6 1509.6 342.0 C1510.8 343.4 1511.8 306.4 1513.0 313.5 C1514.2 320.6 1515.5 384.8 1516.9 384.8 C1518.4 384.8 1520.0 311.5 1521.7 313.5 C1523.4 315.5 1525.5 396.4 1527.0 397.0 C1528.5 397.6 1529.8 325.0 1530.8 317.0 C1531.8 309.0 1532.3 355.2 1533.0 349.0 C1533.7 342.8 1534.2 296.9 1534.8 279.6 C1535.4 262.3 1536.1 253.3 1536.6 245.0 C1537.1 236.7 1537.4 233.6 1538.0 230.0 C1538.6 226.4 1539.2 224.9 1540.0 223.5 C1540.8 222.1 1541.8 222.1 1543.0 221.8 C1544.2 221.5 1492.2 221.6 1547.0 221.6 C1601.8 221.6 1817.4 221.6 1871.5 221.6" fill="none" stroke="#1010dd" stroke-width="2.9" stroke-linejoin="round"/><clipPath id="pclip"><rect x="1279.5" y="218.4" width="592.0" height="653.2"/></clipPath><path d="M1280.0 777.5 C1284.6 774.4 1298.0 764.2 1307.5 758.6 C1317.0 753.0 1327.3 747.9 1336.7 744.0 C1346.1 740.1 1357.6 736.7 1364.0 735.0 C1370.4 733.3 1371.0 733.3 1375.0 733.8 C1379.0 734.3 1383.8 734.6 1387.7 737.8 C1391.6 741.0 1396.0 747.3 1398.6 753.0 C1401.1 758.7 1401.8 763.3 1403.0 772.0 C1404.2 780.7 1405.1 793.7 1405.8 805.0 C1406.5 816.3 1406.9 828.9 1407.2 840.0 C1407.5 851.1 1407.6 866.3 1407.7 871.6 L1407.7 871.6 C1407.9 859.8 1408.2 821.9 1409.0 801.0 C1409.8 780.1 1410.7 762.7 1412.5 746.0 C1414.3 729.3 1416.7 716.0 1420.0 701.0 C1423.3 686.0 1428.3 671.8 1432.5 656.0 C1436.7 640.2 1441.2 621.7 1445.0 606.0 C1448.8 590.3 1452.2 576.3 1455.0 562.0 C1457.8 547.7 1459.6 534.2 1462.0 520.0 C1464.4 505.8 1467.1 491.3 1469.5 477.0 C1471.9 462.7 1474.2 448.3 1476.5 434.0 C1478.8 419.7 1481.2 406.6 1483.5 391.0 C1485.8 375.4 1488.1 360.7 1490.4 340.4 C1492.7 320.1 1495.7 287.0 1497.4 269.0 C1499.1 251.0 1499.7 240.5 1500.5 232.6 C1501.3 224.7 1502.0 223.4 1502.3 221.6 L1534.8 221.6 L1534.8 221.6 C1535.4 224.0 1537.0 227.5 1538.3 236.0 C1539.6 244.5 1540.7 256.7 1542.6 272.6 C1544.5 288.6 1546.7 313.7 1549.6 331.7 C1552.5 349.7 1555.9 365.7 1560.0 380.4 C1564.1 395.1 1569.0 407.6 1574.0 420.0 C1579.0 432.4 1583.5 443.3 1590.0 455.0 C1596.5 466.7 1602.9 478.2 1613.0 490.0 C1623.1 501.8 1635.4 515.0 1650.6 526.0 C1665.8 537.0 1686.8 548.2 1704.0 556.0 C1721.2 563.8 1736.8 568.0 1754.0 573.0 C1771.2 578.0 1787.4 581.6 1807.0 585.7 C1826.6 589.8 1860.8 595.5 1871.5 597.5" fill="none" stroke="#ee1111" stroke-width="2.9" stroke-linejoin="round" clip-path="url(#pclip)"/><rect x="1649" y="829.7" width="222.5" height="41.9" fill="#fff" stroke="#222" stroke-width="1.2"/><rect x="1654" y="834.6" width="12" height="12" fill="#e8e8e8" stroke="#aaa" stroke-width="0.8"/><path d="M1656 840.6 L1659 843.6 L1664 836.6" stroke="#555" stroke-width="1.5" fill="none"/><line x1="1670" y1="840.6" x2="1684" y2="840.6" stroke="#1010dd" stroke-width="2.5"/><text x="1689" y="844.4" font-family="Liberation Mono" font-size="10.6" fill="#111">Simulation: db(S(1,1)(1,1))</text><rect x="1654" y="851.4" width="12" height="12" fill="#e8e8e8" stroke="#aaa" stroke-width="0.8"/><path d="M1656 857.4 L1659 860.4 L1664 853.4" stroke="#555" stroke-width="1.5" fill="none"/><line x1="1670" y1="857.4" x2="1684" y2="857.4" stroke="#ee1111" stroke-width="2.5"/><text x="1689" y="861.1999999999999" font-family="Liberation Mono" font-size="10.6" fill="#111">Simulation: db(S(2,1)(1,1))</text></svg>
<div class="t" style="left:1262px;width:600px;text-align:center;top:179.3px;font-size:14.5px;line-height:17.4px;color:#111;">RectPlot1</div>
<div class="t" style="left:670px;width:600px;text-align:right;top:257.9px;font-size:11.5px;line-height:13.8px;color:#222;">-10</div>
<div class="t" style="left:670px;width:600px;text-align:right;top:300.4px;font-size:11.5px;line-height:13.8px;color:#222;">-20</div>
<div class="t" style="left:670px;width:600px;text-align:right;top:343.0px;font-size:11.5px;line-height:13.8px;color:#222;">-30</div>
<div class="t" style="left:670px;width:600px;text-align:right;top:385.6px;font-size:11.5px;line-height:13.8px;color:#222;">-40</div>
<div class="t" style="left:670px;width:600px;text-align:right;top:428.2px;font-size:11.5px;line-height:13.8px;color:#222;">-50</div>
<div class="t" style="left:670px;width:600px;text-align:right;top:470.7px;font-size:11.5px;line-height:13.8px;color:#222;">-60</div>
<div class="t" style="left:670px;width:600px;text-align:right;top:513.3px;font-size:11.5px;line-height:13.8px;color:#222;">-70</div>
<div class="t" style="left:670px;width:600px;text-align:right;top:555.9px;font-size:11.5px;line-height:13.8px;color:#222;">-80</div>
<div class="t" style="left:670px;width:600px;text-align:right;top:598.4px;font-size:11.5px;line-height:13.8px;color:#222;">-90</div>
<div class="t" style="left:670px;width:600px;text-align:right;top:641.0px;font-size:11.5px;line-height:13.8px;color:#222;">-100</div>
<div class="t" style="left:670px;width:600px;text-align:right;top:683.6px;font-size:11.5px;line-height:13.8px;color:#222;">-110</div>
<div class="t" style="left:670px;width:600px;text-align:right;top:726.1px;font-size:11.5px;line-height:13.8px;color:#222;">-120</div>
<div class="t" style="left:670px;width:600px;text-align:right;top:768.7px;font-size:11.5px;line-height:13.8px;color:#222;">-130</div>
<div class="t" style="left:670px;width:600px;text-align:right;top:811.3px;font-size:11.5px;line-height:13.8px;color:#222;">-140</div>
<div class="t" style="left:670px;width:600px;text-align:right;top:853.8px;font-size:11.5px;line-height:13.8px;color:#222;">-150</div>
<div class="t" style="left:979.5px;width:600px;text-align:center;top:879.4px;font-size:11.5px;line-height:13.8px;color:#222;">0.80</div>
<div class="t" style="left:1021.7857142857142px;width:600px;text-align:center;top:879.4px;font-size:11.5px;line-height:13.8px;color:#222;">0.85</div>
<div class="t" style="left:1064.0714285714287px;width:600px;text-align:center;top:879.4px;font-size:11.5px;line-height:13.8px;color:#222;">0.90</div>
<div class="t" style="left:1106.357142857143px;width:600px;text-align:center;top:879.4px;font-size:11.5px;line-height:13.8px;color:#222;">0.95</div>
<div class="t" style="left:1148.642857142857px;width:600px;text-align:center;top:879.4px;font-size:11.5px;line-height:13.8px;color:#222;">1.00</div>
<div class="t" style="left:1190.9285714285713px;width:600px;text-align:center;top:879.4px;font-size:11.5px;line-height:13.8px;color:#222;">1.05</div>
<div class="t" style="left:1233.2142857142858px;width:600px;text-align:center;top:879.4px;font-size:11.5px;line-height:13.8px;color:#222;">1.10</div>
<div class="t" style="left:1275.5px;width:600px;text-align:center;top:879.4px;font-size:11.5px;line-height:13.8px;color:#222;">1.15</div>
<div class="t" style="left:1317.7857142857142px;width:600px;text-align:center;top:879.4px;font-size:11.5px;line-height:13.8px;color:#222;">1.20</div>
<div class="t" style="left:1360.0714285714284px;width:600px;text-align:center;top:879.4px;font-size:11.5px;line-height:13.8px;color:#222;">1.25</div>
<div class="t" style="left:1402.357142857143px;width:600px;text-align:center;top:879.4px;font-size:11.5px;line-height:13.8px;color:#222;">1.30</div>
<div class="t" style="left:1444.642857142857px;width:600px;text-align:center;top:879.4px;font-size:11.5px;line-height:13.8px;color:#222;">1.35</div>
<div class="t" style="left:1486.9285714285716px;width:600px;text-align:center;top:879.4px;font-size:11.5px;line-height:13.8px;color:#222;">1.40</div>
<div class="t" style="left:1529.2142857142858px;width:600px;text-align:center;top:879.4px;font-size:11.5px;line-height:13.8px;color:#222;">1.45</div>
<div class="t" style="left:1571.5px;width:600px;text-align:center;top:879.4px;font-size:11.5px;line-height:13.8px;color:#222;">1.50</div>
<div class="t" style="left:1275.5px;width:600px;text-align:center;top:895.5px;font-size:12.5px;line-height:15.0px;color:#222;">Frequency</div>
<div class="t" style="left:1269px;width:600px;text-align:right;top:896.0px;font-size:12.5px;line-height:15.0px;color:#222;">[GHz]</div>
<div class="a" style="left:368px;top:933px;width:605px;height:218px;background:#fff;border:1px solid #d8d8dd"></div>
<div class="a" style="left:369px;top:934px;width:603px;height:24px;background:#efeff3"></div>
<div class="t" style="left:383px;top:938.4px;font-size:11px;line-height:13.2px;color:#555;">Variables</div>
<div class="a" style="left:434px;top:942px;width:500px;height:7px;background-image:radial-gradient(circle,#a8a8b0 0.75px,transparent 1.15px),radial-gradient(circle,#a8a8b0 0.75px,transparent 1.15px);background-size:3.75px 7.5px;background-position:0 0,1.875px 3.75px;opacity:0.75"></div>
<svg class="a" style="left:942px;top:943px;" width="10" height="6" viewBox="0 0 10 6"><path d="M0 0 H10 L5 6 Z" fill="#222"/></svg>
<svg class="a" style="left:957px;top:939px;" width="9" height="15" viewBox="0 0 9 15"><path d="M2.6 1.2 H6.4 V8 H8.2 V9.4 H0.8 V8 H2.6 Z" fill="#f4f4f6" stroke="#222" stroke-width="1.2"/><path d="M4.5 9.5 V14" stroke="#222" stroke-width="1.3"/></svg>
<div class="a" style="left:369px;top:957px;width:603px;height:26px;background:#f7f8fa"></div>
<div class="a" style="left:957px;top:957px;width:15px;height:26px;background:#eef1f6"></div>
<svg class="a" style="left:966px;top:977px;" width="6" height="5" viewBox="0 0 6 5"><path d="M0 0 H6 M0 2 L6 2 L3 5 Z" stroke="#666" stroke-width="0.6" fill="#666"/></svg>
<svg class="a" style="left:374px;top:962px;" width="17" height="17" viewBox="0 0 17 17"><path d="M8.5 1 V16 M1 8.5 H16" stroke="#8d86cc" stroke-width="3.2"/></svg>
<div class="a" style="left:394px;top:961px;width:1px;height:18px;background:#ddd"></div>
<svg class="a" style="left:398px;top:963px;" width="18" height="15" viewBox="0 0 18 15"><path d="M1 5 H5 L7 2 H11 L13 5 H16 V14 H1 Z" fill="#9f99d8"/><circle cx="8.5" cy="9.5" r="2.6" fill="#f7f8fa"/><path d="M15 0 L16 2 L18 2" stroke="#555" stroke-width="0.8" fill="none"/></svg>
<svg class="a" style="left:420px;top:963px;" width="18" height="15" viewBox="0 0 18 15"><path d="M1 5 H5 L7 2 H11 L13 5 H16 V14 H1 Z" fill="#b8b4e0"/><circle cx="8.5" cy="9.5" r="3.2" fill="#f7f8fa"/><circle cx="8.5" cy="9.5" r="2" fill="#b8b4e0"/></svg>
<div class="a" style="left:441px;top:961px;width:1px;height:18px;background:#ddd"></div>
<svg class="a" style="left:446px;top:962px;" width="22" height="17" viewBox="0 0 22 17"><path d="M1 1 H15 L10 8 V16 L6 13 V8 Z" fill="#8d86cc"/><path d="M17 8 H21 L19 11 Z" fill="#444"/></svg>
<div class="a" style="left:475px;top:961px;width:1px;height:18px;background:#ddd"></div>
<div class="t" style="left:481px;top:963.9px;font-size:11px;line-height:13.2px;color:#333;">Used by:</div>
<div class="a" style="left:531px;top:961px;width:113px;height:20px;background:#f0f0f0;border:1px solid #b9b9b9"></div>
<div class="t" style="left:536px;top:964.4px;font-size:11px;line-height:13.2px;color:#222;">All</div>
<svg class="a" style="left:630px;top:968px;" width="7" height="5" viewBox="0 0 7 5"><path d="M0.5 0.5 L3.5 3.5 L6.5 0.5" stroke="#555" stroke-width="1" fill="none"/></svg>
<svg class="a" style="left:651px;top:962px;" width="24" height="17" viewBox="0 0 24 17"><g fill="#777"><circle cx="2.5" cy="2.5" r="1.8"/><circle cx="2.5" cy="8.5" r="1.8"/><circle cx="2.5" cy="14.5" r="1.8"/></g><path d="M7 2.5 H15 M7 8.5 H15 M7 14.5 H15" stroke="#777" stroke-width="1.4"/><path d="M18 7 H23 L20.5 10 Z" fill="#444"/></svg>
<div class="a" style="left:680px;top:961px;width:1px;height:18px;background:#ddd"></div>
<div class="a" style="left:688px;top:961px;width:112px;height:21px;background:#fff;border:1px solid #c3c3c3"></div>
<div class="t" style="left:692px;top:964.9px;font-size:11px;line-height:13.2px;color:#666;">Search</div>
<svg class="a" style="left:809px;top:962px;" width="24" height="17" viewBox="0 0 24 17"><g fill="#777"><circle cx="2.5" cy="2.5" r="1.8"/><circle cx="2.5" cy="8.5" r="1.8"/><circle cx="2.5" cy="14.5" r="1.8"/></g><path d="M7 2.5 H15 M7 8.5 H15 M7 14.5 H15" stroke="#777" stroke-width="1.4"/><path d="M18 7 H23 L20.5 10 Z" fill="#444"/></svg>
<div class="a" style="left:369px;top:983px;width:588px;height:1px;background:#e4e4e4"></div>
<div class="a" style="left:369px;top:988px;width:588px;height:21px;background:#f5f5f7;border-bottom:1px solid #e0e0e0"></div>
<div class="a" style="left:462px;top:988px;width:1px;height:21px;background:#e3e3e3"></div>
<div class="a" style="left:657px;top:988px;width:1px;height:21px;background:#e3e3e3"></div>
<div class="a" style="left:770px;top:988px;width:1px;height:21px;background:#e3e3e3"></div>
<div class="a" style="left:845px;top:988px;width:1px;height:21px;background:#e3e3e3"></div>
<div class="a" style="left:901px;top:988px;width:1px;height:21px;background:#e3e3e3"></div>
<div class="a" style="left:957px;top:988px;width:1px;height:21px;background:#e3e3e3"></div>
<div class="t" style="left:116px;width:600px;text-align:center;top:992.4px;font-size:11px;line-height:13.2px;color:#333;">Name</div>
<div class="t" style="left:259px;width:600px;text-align:center;top:992.4px;font-size:11px;line-height:13.2px;color:#333;">Expression</div>
<div class="t" style="left:413px;width:600px;text-align:center;top:992.4px;font-size:11px;line-height:13.2px;color:#333;">Value</div>
<div class="t" style="left:507px;width:600px;text-align:center;top:992.4px;font-size:11px;line-height:13.2px;color:#333;">Optimizable</div>
<div class="t" style="left:573px;width:600px;text-align:center;top:992.4px;font-size:11px;line-height:13.2px;color:#333;">Min.</div>
<div class="t" style="left:629px;width:600px;text-align:center;top:992.4px;font-size:11px;line-height:13.2px;color:#333;">Max.</div>
<div class="a" style="left:369px;top:1032px;width:588px;height:1px;background:#efefef"></div>
<div class="t" style="left:373px;top:1014.4px;width:87px;overflow:hidden;font-size:11px;line-height:14px;font-weight:bold;color:#111">helix01_distance</div>
<div class="t" style="left:466px;top:1014.8px;font-size:11px;line-height:13.2px;color:#222;">5</div>
<div class="t" style="left:660px;top:1014.8px;font-size:11px;line-height:13.2px;color:#999;">5</div>
<div class="a" style="left:800px;top:1014px;width:13px;height:13px;background:#fff;border:1px solid #555"></div>
<div class="t" style="left:848px;top:1014.8px;font-size:11px;line-height:13.2px;color:#222;">0</div>
<div class="t" style="left:904px;top:1014.8px;font-size:11px;line-height:13.2px;color:#222;">0</div>
<div class="a" style="left:369px;top:1055px;width:588px;height:1px;background:#efefef"></div>
<div class="t" style="left:373px;top:1037.0px;width:87px;overflow:hidden;font-size:11px;line-height:14px;font-weight:bold;color:#111">helix12_distance</div>
<div class="t" style="left:466px;top:1037.4px;font-size:11px;line-height:13.2px;color:#222;">helix_distances</div>
<div class="t" style="left:660px;top:1037.4px;font-size:11px;line-height:13.2px;color:#999;">11</div>
<div class="t" style="left:848px;top:1037.4px;font-size:11px;line-height:13.2px;color:#222;">0</div>
<div class="t" style="left:904px;top:1037.4px;font-size:11px;line-height:13.2px;color:#222;">0</div>
<div class="a" style="left:369px;top:1077px;width:588px;height:1px;background:#efefef"></div>
<div class="t" style="left:373px;top:1059.6px;width:87px;overflow:hidden;font-size:11px;line-height:14px;font-weight:bold;color:#111">helix23_distance</div>
<div class="t" style="left:466px;top:1060.0px;font-size:11px;line-height:13.2px;color:#222;">helix_distances</div>
<div class="t" style="left:660px;top:1060.0px;font-size:11px;line-height:13.2px;color:#999;">11</div>
<div class="t" style="left:848px;top:1060.0px;font-size:11px;line-height:13.2px;color:#222;">0</div>
<div class="t" style="left:904px;top:1060.0px;font-size:11px;line-height:13.2px;color:#222;">0</div>
<div class="a" style="left:369px;top:1100px;width:588px;height:1px;background:#efefef"></div>
<div class="t" style="left:373px;top:1082.2px;width:87px;overflow:hidden;font-size:11px;line-height:14px;font-weight:bold;color:#111">helix34_distance</div>
<div class="t" style="left:466px;top:1082.6px;font-size:11px;line-height:13.2px;color:#222;">helix_distances</div>
<div class="t" style="left:660px;top:1082.6px;font-size:11px;line-height:13.2px;color:#999;">11</div>
<div class="t" style="left:848px;top:1082.6px;font-size:11px;line-height:13.2px;color:#222;">0</div>
<div class="t" style="left:904px;top:1082.6px;font-size:11px;line-height:13.2px;color:#222;">0</div>
<div class="a" style="left:369px;top:1122px;width:588px;height:1px;background:#efefef"></div>
<div class="t" style="left:373px;top:1104.8px;width:87px;overflow:hidden;font-size:11px;line-height:14px;font-weight:bold;color:#111">helix45_distance</div>
<div class="t" style="left:466px;top:1105.2px;font-size:11px;line-height:13.2px;color:#222;">helix_distances</div>
<div class="t" style="left:660px;top:1105.2px;font-size:11px;line-height:13.2px;color:#999;">11</div>
<div class="t" style="left:848px;top:1105.2px;font-size:11px;line-height:13.2px;color:#222;">0</div>
<div class="t" style="left:904px;top:1105.2px;font-size:11px;line-height:13.2px;color:#222;">0</div>
<div class="a" style="left:369px;top:1145px;width:588px;height:1px;background:#efefef"></div>
<div class="t" style="left:373px;top:1127.4px;width:87px;overflow:hidden;font-size:11px;line-height:14px;font-weight:bold;color:#111">helix50_distance</div>
<div class="t" style="left:466px;top:1127.8px;font-size:11px;line-height:13.2px;color:#222;">5</div>
<div class="t" style="left:660px;top:1127.8px;font-size:11px;line-height:13.2px;color:#999;">5</div>
<div class="a" style="left:800px;top:1127px;width:13px;height:13px;background:#fff;border:1px solid #555"></div>
<div class="t" style="left:848px;top:1127.8px;font-size:11px;line-height:13.2px;color:#222;">0</div>
<div class="t" style="left:904px;top:1127.8px;font-size:11px;line-height:13.2px;color:#222;">0</div>
<div class="a" style="left:369px;top:1145px;width:588px;height:6px;background:#fff"></div>
<div class="a" style="left:800px;top:1146px;width:13px;height:5px;background:#fff;border:1px solid #999;border-bottom:none"></div>
<div class="a" style="left:957px;top:1010px;width:15px;height:141px;background:#fff"></div>
<div class="a" style="left:957px;top:1011px;width:15px;height:17px;background:#fff;border:1px solid #bcbcbc"></div>
<svg class="a" style="left:961px;top:1017px;" width="8" height="5" viewBox="0 0 8 5"><path d="M0 5 H8 L4 0 Z" fill="#111"/></svg>
<div class="a" style="left:957px;top:1028px;width:15px;height:16px;background:#fff;border:1px solid #c9c9c9"></div>
<div class="a" style="left:957px;top:1134px;width:15px;height:17px;background:#fff;border:1px solid #bcbcbc"></div>
<svg class="a" style="left:961px;top:1140px;" width="8" height="5" viewBox="0 0 8 5"><path d="M0 0 H8 L4 5 Z" fill="#111"/></svg>
<div class="a" style="left:980px;top:933px;width:504px;height:218px;background:#fff;border:1px solid #d8d8dd"></div>
<div class="a" style="left:981px;top:934px;width:502px;height:24px;background:#efeff3"></div>
<div class="t" style="left:995px;top:938.4px;font-size:11px;line-height:13.2px;color:#555;">Messages</div>
<div class="a" style="left:1051px;top:942px;width:394px;height:7px;background-image:radial-gradient(circle,#a8a8b0 0.75px,transparent 1.15px),radial-gradient(circle,#a8a8b0 0.75px,transparent 1.15px);background-size:3.75px 7.5px;background-position:0 0,1.875px 3.75px;opacity:0.75"></div>
<svg class="a" style="left:1453px;top:943px;" width="10" height="6" viewBox="0 0 10 6"><path d="M0 0 H10 L5 6 Z" fill="#222"/></svg>
<svg class="a" style="left:1468px;top:939px;" width="9" height="15" viewBox="0 0 9 15"><path d="M2.6 1.2 H6.4 V8 H8.2 V9.4 H0.8 V8 H2.6 Z" fill="#f4f4f6" stroke="#222" stroke-width="1.2"/><path d="M4.5 9.5 V14" stroke="#222" stroke-width="1.3"/></svg>
<div class="a" style="left:981px;top:957px;width:502px;height:23px;background:#f9f9fb;border-bottom:1px solid #e0e0e0"></div>
<div class="a" style="left:988px;top:958px;width:73px;height:21px;background:#cde3f0;border:1px solid #6f98b6"></div>
<svg class="a" style="left:998px;top:960.5px;" width="15" height="15" viewBox="0 0 15 15"><circle cx="7.5" cy="7.5" r="6.8" fill="#e0202a"/><path d="M4.8 4.8 L10.2 10.2 M10.2 4.8 L4.8 10.2" stroke="#fff" stroke-width="1.6"/></svg>
<div class="t" style="left:1017px;top:961.9px;font-size:11px;line-height:13.2px;color:#222;">0 Errors</div>
<div class="a" style="left:1071px;top:958px;width:91px;height:21px;background:#cde3f0;border:1px solid #6f98b6"></div>
<svg class="a" style="left:1081px;top:960.5px;" width="15" height="15" viewBox="0 0 15 15"><path d="M7.5 1 L14.5 14 H0.5 Z" fill="#f2c200"/><path d="M7.5 5 V10" stroke="#222" stroke-width="1.6"/><circle cx="7.5" cy="12" r="0.9" fill="#222"/></svg>
<div class="t" style="left:1100px;top:961.9px;font-size:11px;line-height:13.2px;color:#222;">0 Warnings</div>
<div class="a" style="left:1171px;top:958px;width:93px;height:21px;background:#cde3f0;border:1px solid #6f98b6"></div>
<svg class="a" style="left:1181px;top:960.5px;" width="15" height="15" viewBox="0 0 15 15"><circle cx="7.5" cy="7.5" r="6.8" fill="#1d6fd0"/><path d="M7.5 6 V12" stroke="#fff" stroke-width="2"/><circle cx="7.5" cy="3.6" r="1.1" fill="#fff"/></svg>
<div class="t" style="left:1200px;top:961.9px;font-size:11px;line-height:13.2px;color:#222;">0 Messages</div>
<div class="a" style="left:1490px;top:933px;width:404px;height:218px;background:#fff;border:1px solid #d8d8dd"></div>
<div class="a" style="left:1491px;top:934px;width:402px;height:24px;background:#efeff3"></div>
<div class="t" style="left:1505px;top:938.4px;font-size:11px;line-height:13.2px;color:#555;">Jobs</div>
<div class="a" style="left:1534px;top:942px;width:321px;height:7px;background-image:radial-gradient(circle,#a8a8b0 0.75px,transparent 1.15px),radial-gradient(circle,#a8a8b0 0.75px,transparent 1.15px);background-size:3.75px 7.5px;background-position:0 0,1.875px 3.75px;opacity:0.75"></div>
<svg class="a" style="left:1863px;top:943px;" width="10" height="6" viewBox="0 0 10 6"><path d="M0 0 H10 L5 6 Z" fill="#222"/></svg>
<svg class="a" style="left:1878px;top:939px;" width="9" height="15" viewBox="0 0 9 15"><path d="M2.6 1.2 H6.4 V8 H8.2 V9.4 H0.8 V8 H2.6 Z" fill="#f4f4f6" stroke="#222" stroke-width="1.2"/><path d="M4.5 9.5 V14" stroke="#222" stroke-width="1.3"/></svg>
<div class="a" style="left:1491px;top:957px;width:402px;height:22px;background:#f9f9fb;border-bottom:1px solid #e2e2e2"></div>
<div class="a" style="left:1725px;top:958px;width:1px;height:20px;background:#e6e6e6"></div>
<div class="a" style="left:1781px;top:958px;width:1px;height:20px;background:#e6e6e6"></div>
<div class="a" style="left:1876px;top:958px;width:1px;height:20px;background:#e6e6e6"></div>
<div class="t" style="left:1308px;width:600px;text-align:center;top:961.4px;font-size:11px;line-height:13.2px;color:#333;">Name</div>
<div class="t" style="left:1454px;width:600px;text-align:center;top:961.4px;font-size:11px;line-height:13.2px;color:#333;">Progress</div>
<div class="t" style="left:1529px;width:600px;text-align:center;top:961.4px;font-size:11px;line-height:13.2px;color:#333;">Elapsed time</div>
<div class="a" style="left:1894px;top:148px;width:26px;height:1003px;background:#ededf1"></div>
<div class="a" style="left:1916px;top:149px;width:2px;height:55px;background:#d6d6dc"></div>
<div class="t" style="left:1844px;top:169.5px;width:120px;height:14px;line-height:14px;text-align:center;font-size:11px;color:#555;transform:rotate(90deg)">Simulation</div>
<div class="a" style="left:1916px;top:214px;width:2px;height:86px;background:#d6d6dc"></div>
<div class="t" style="left:1844px;top:250.0px;width:120px;height:14px;line-height:14px;text-align:center;font-size:11px;color:#555;transform:rotate(90deg)">Postprocessing</div>
<div class="a" style="left:1916px;top:309px;width:2px;height:77px;background:#d6d6dc"></div>
<div class="t" style="left:1844px;top:340.5px;width:120px;height:14px;line-height:14px;text-align:center;font-size:11px;color:#555;transform:rotate(90deg)">Optimization</div>
<div class="a" style="left:1916px;top:394px;width:2px;height:46px;background:#d6d6dc"></div>
<div class="t" style="left:1844px;top:410.0px;width:120px;height:14px;line-height:14px;text-align:center;font-size:11px;color:#555;transform:rotate(90deg)">Tuning</div>
</body></html>
